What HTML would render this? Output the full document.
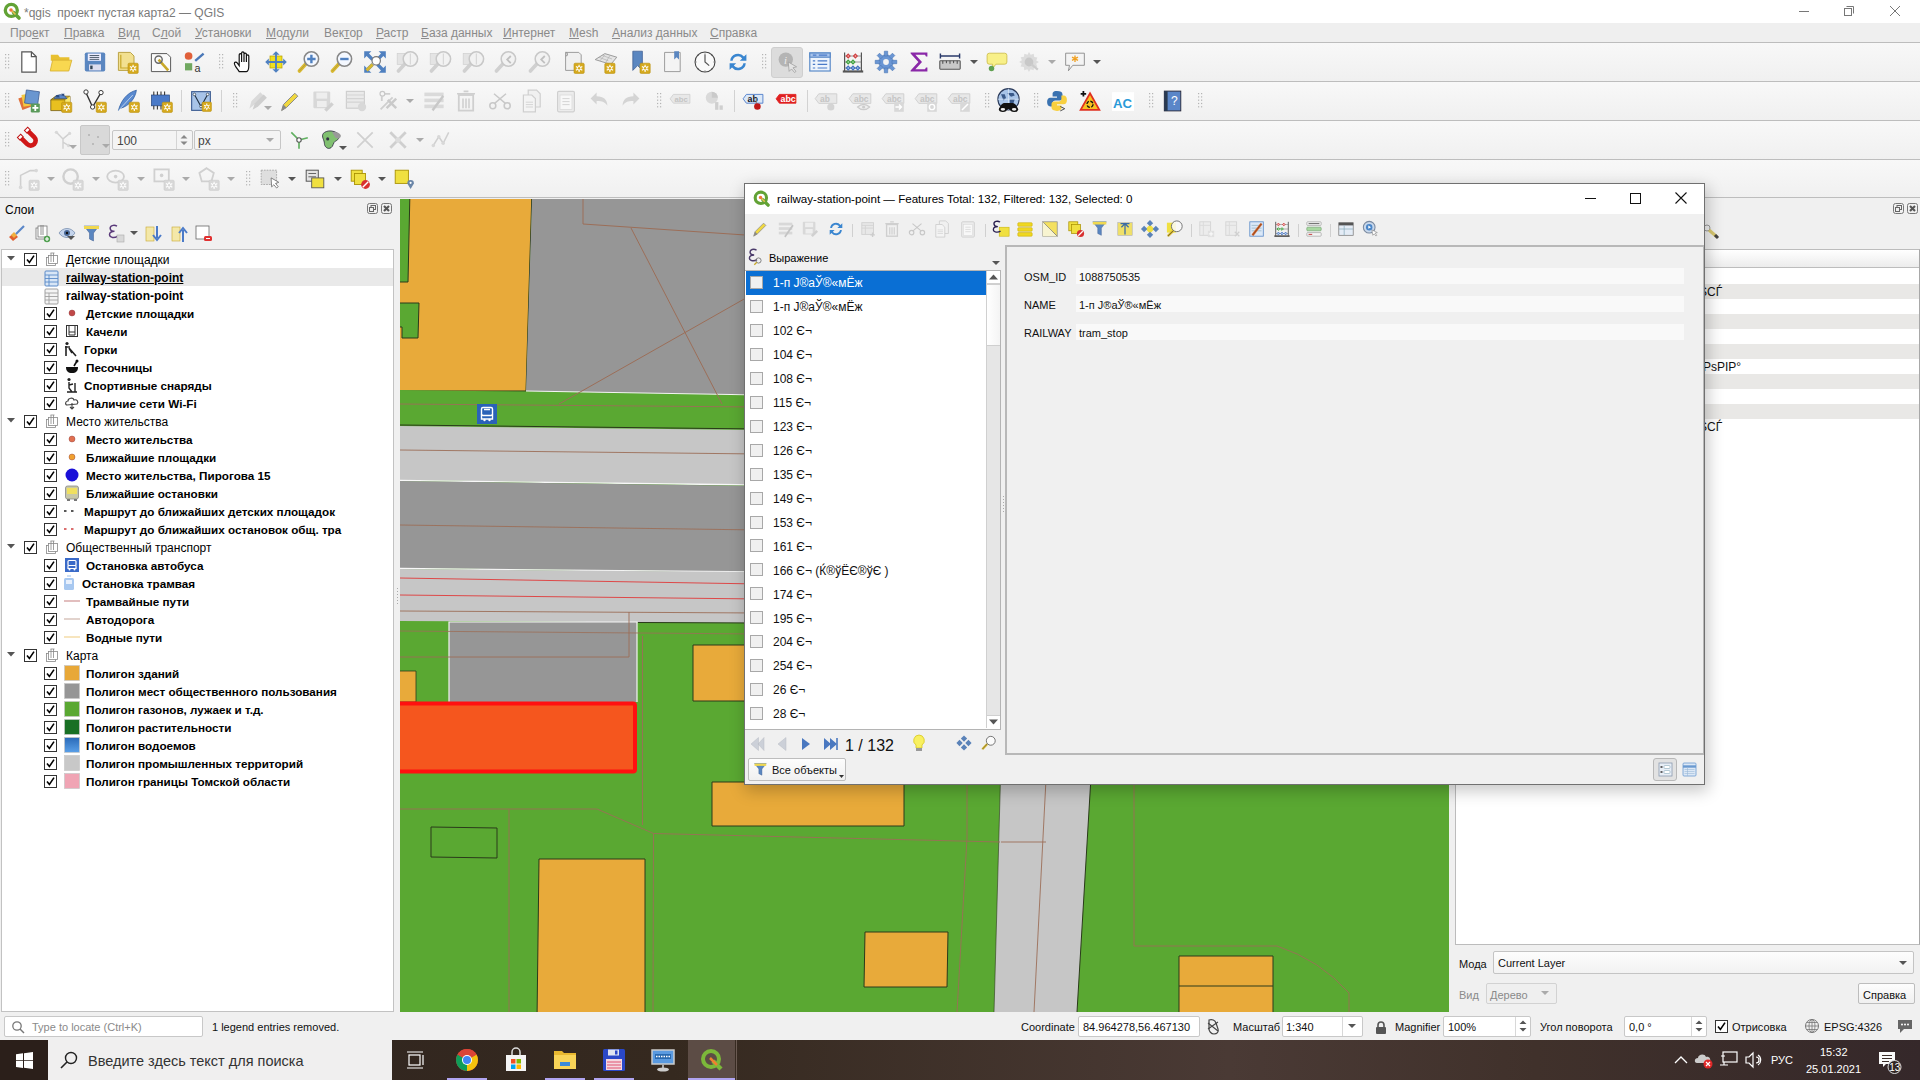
<!DOCTYPE html>
<html><head><meta charset="utf-8">
<style>
*{margin:0;padding:0;box-sizing:border-box}
html,body{width:1920px;height:1080px;overflow:hidden;background:#f0f0f0;font-family:"Liberation Sans",sans-serif;font-size:12px;color:#000;position:relative}
.a{position:absolute}
.t{position:absolute;white-space:nowrap;line-height:14px}
svg.i{position:absolute;overflow:visible}
#title{left:0;top:0;width:1920px;height:23px;background:#fff}
#menu{left:0;top:23px;width:1920px;height:19px;background:#efefef}
.tb{left:0;width:1920px;background:linear-gradient(#f8f8f8,#f0f0f0);border-top:1px solid #bdbdbd}
.hd{position:absolute;width:5px;height:18px;background-image:radial-gradient(circle,#bcbcbc 0.9px,transparent 1.2px);background-size:3px 3px}
.dd{position:absolute;width:0;height:0;border-left:4px solid transparent;border-right:4px solid transparent;border-top:4px solid #555}
.dd.g{border-top-color:#aaa}
.sep{position:absolute;width:1px;height:22px;background:#d2d2d2}
.menu span{position:absolute;top:3px;color:#8a8a8a;font-size:12px;line-height:14px}
</style></head><body>

<div id="title" class="a"></div>
<svg class="i" style="left:3.0px;top:2.0px" width="18" height="18" viewBox="0 0 18 18"><circle cx="8.3" cy="8.3" r="6" fill="none" stroke="#62a235" stroke-width="3.3"/><path d="M10.5 10.5l5.5 5.5" stroke="#62a235" stroke-width="3.6" stroke-linecap="round"/><path d="M8.5 8.5l4 4" stroke="#e8c050" stroke-width="1.6"/><circle cx="8" cy="8" r="1.8" fill="#f07838"/></svg>
<div class="t" style="left:24px;top:4.5px;font-size:12px;line-height:16px;color:#7a7a7a;">*qgis&nbsp; проект пустая карта2 — QGIS</div>
<div class="a" style="left:1799px;top:11px;width:10px;height:1px;background:#777"></div>
<svg class="i" style="left:1843px;top:5px" width="12" height="12" viewBox="0 0 12 12"><path d="M3.5 1.5h7v7" fill="none" stroke="#777" stroke-width="1"/><rect x="1.5" y="3.5" width="7" height="7" fill="none" stroke="#777" stroke-width="1"/></svg>
<svg class="i" style="left:1889px;top:5px" width="12" height="12" viewBox="0 0 12 12"><path d="M1 1l10 10M11 1L1 11" stroke="#777" stroke-width="1"/></svg>
<div id="menu" class="a menu">
<span style="left:10px">Про<u>е</u>кт</span>
<span style="left:64px"><u>П</u>равка</span>
<span style="left:118px"><u>В</u>ид</span>
<span style="left:152px">С<u>л</u>ой</span>
<span style="left:195px"><u>У</u>становки</span>
<span style="left:266px"><u>М</u>одули</span>
<span style="left:324px">Век<u>т</u>ор</span>
<span style="left:376px"><u>Р</u>астр</span>
<span style="left:421px"><u>Б</u>аза данных</span>
<span style="left:503px"><u>И</u>нтернет</span>
<span style="left:569px"><u>M</u>esh</span>
<span style="left:612px"><u>А</u>нализ данных</span>
<span style="left:710px"><u>С</u>правка</span>
</div>
<div class="a tb" style="top:42px;height:39px"></div>
<div class="a tb" style="top:81px;height:39px"></div>
<div class="a tb" style="top:120px;height:39px"></div>
<div class="a tb" style="top:159px;height:39px"></div>
<div class="a" style="left:0px;top:197px;width:1920px;height:1px;background:#bdbdbd"></div>
<svg class="i" style="left:5px;top:54.0px" width="5" height="15" viewBox="0 0 5 15"><rect x="0" y="0" width="1.2" height="1.2" fill="#b4b4b4"/><rect x="0" y="3.3" width="1.2" height="1.2" fill="#b4b4b4"/><rect x="0" y="6.6" width="1.2" height="1.2" fill="#b4b4b4"/><rect x="0" y="9.9" width="1.2" height="1.2" fill="#b4b4b4"/><rect x="0" y="13.2" width="1.2" height="1.2" fill="#b4b4b4"/><rect x="3" y="0" width="1.2" height="1.2" fill="#b4b4b4"/><rect x="3" y="3.3" width="1.2" height="1.2" fill="#b4b4b4"/><rect x="3" y="6.6" width="1.2" height="1.2" fill="#b4b4b4"/><rect x="3" y="9.9" width="1.2" height="1.2" fill="#b4b4b4"/><rect x="3" y="13.2" width="1.2" height="1.2" fill="#b4b4b4"/></svg>
<svg class="i" style="left:16.5px;top:49.5px" width="24" height="24" viewBox="0 0 20 20"><path d="M4 1.5h8l4 4v13H4z" fill="#fff" stroke="#555" stroke-width="1"/><path d="M12 1.5v4h4" fill="none" stroke="#555"/></svg>
<svg class="i" style="left:49.0px;top:49.5px" width="24" height="24" viewBox="0 0 20 20"><path d="M1.5 4h6l1.5 2h8v3H1.5z" fill="#e8c030"/><path d="M1 17.5l2-9h16l-2.5 9z" fill="#f8d850" stroke="#d8b030" stroke-width=".7"/></svg>
<svg class="i" style="left:83.0px;top:49.5px" width="24" height="24" viewBox="0 0 20 20"><rect x="1.5" y="2" width="17" height="16" rx="1.5" fill="#5a86c0"/><rect x="4" y="3" width="11" height="6" fill="#eef"/><path d="M5.5 4.6h8M5.5 6.2h8M5.5 7.8h8" stroke="#345" stroke-width=".7"/><rect x="5" y="12" width="10" height="5" fill="#dde"/><rect x="6" y="13" width="2" height="3" fill="#345"/></svg>
<svg class="i" style="left:115.5px;top:49.5px" width="24" height="24" viewBox="0 0 20 20"><path d="M2 2h10l3 3v12H2z" fill="#f2e090" stroke="#b8a040" stroke-width=".8"/><path d="M4 4v11h9" stroke="#c8a828" fill="none"/><rect x="10" y="11" width="8.5" height="8.5" rx="1" fill="#d6aa1e" stroke="#b89010" stroke-width=".5"/><g stroke="#fff" stroke-width=".9"><path d="M14.25 12.2v6.1M11.6 13.7l5.3 3.1M16.9 13.7l-5.3 3.1"/></g><circle cx="14.25" cy="15.25" r="1.5" fill="#d6aa1e" stroke="#fff" stroke-width=".8"/></svg>
<svg class="i" style="left:149.0px;top:49.5px" width="24" height="24" viewBox="0 0 20 20"><path d="M2 3h13l3 3v12H2z" fill="#fafafa" stroke="#555" stroke-width=".8"/><path d="M8 8l8 9" stroke="#c8a828" stroke-width="2.2"/><circle cx="8" cy="8" r="3" fill="none" stroke="#666" stroke-width="1.2"/></svg>
<svg class="i" style="left:182.0px;top:49.5px" width="24" height="24" viewBox="0 0 20 20"><circle cx="5.5" cy="5" r="3.2" fill="#e0603a"/><path d="M11 9l7-6" stroke="#4a78b8" stroke-width="2"/><rect x="2.5" y="11" width="6" height="6" fill="#70a860"/><text x="10.5" y="18" font-size="9" font-family="Liberation Sans" fill="#333">a</text></svg>
<svg class="i" style="left:219px;top:54.0px" width="5" height="15" viewBox="0 0 5 15"><rect x="0" y="0" width="1.2" height="1.2" fill="#b4b4b4"/><rect x="0" y="3.3" width="1.2" height="1.2" fill="#b4b4b4"/><rect x="0" y="6.6" width="1.2" height="1.2" fill="#b4b4b4"/><rect x="0" y="9.9" width="1.2" height="1.2" fill="#b4b4b4"/><rect x="0" y="13.2" width="1.2" height="1.2" fill="#b4b4b4"/><rect x="3" y="0" width="1.2" height="1.2" fill="#b4b4b4"/><rect x="3" y="3.3" width="1.2" height="1.2" fill="#b4b4b4"/><rect x="3" y="6.6" width="1.2" height="1.2" fill="#b4b4b4"/><rect x="3" y="9.9" width="1.2" height="1.2" fill="#b4b4b4"/><rect x="3" y="13.2" width="1.2" height="1.2" fill="#b4b4b4"/></svg>
<svg class="i" style="left:231.5px;top:49.5px" width="24" height="24" viewBox="0 0 20 20"><path d="M6 18c-2-3-4-5-4-7 0-1 1.5-1.5 2.5 0l1.5 2V4c0-1.2 2-1.2 2 0v6V2.5c0-1.2 2-1.2 2 0V10V3.5c0-1.2 2-1.2 2 0V10V5c0-1.2 2-1.2 2 0v8c0 3-1 5-2 5z" fill="#fff" stroke="#111" stroke-width="1"/></svg>
<svg class="i" style="left:264.0px;top:49.5px" width="24" height="24" viewBox="0 0 20 20"><rect x="5" y="5" width="10" height="10" fill="#f0e020" stroke="#b8a000" stroke-width=".6"/><path d="M10 1l3 3h-6zM10 19l3-3h-6zM1 10l3-3v6zM19 10l-3-3v6z" fill="#4f80c0"/><path d="M10 3v14M3 10h14" stroke="#4f80c0" stroke-width="1.6"/></svg>
<svg class="i" style="left:297.0px;top:49.5px" width="24" height="24" viewBox="0 0 20 20"><path d="M7.5 11.5L2 17.5" stroke="#d8b830" stroke-width="3" stroke-linecap="round"/><path d="M7.5 11.5L2 17.5" stroke="#555" stroke-width="0.5" opacity="0.4"/><circle cx="12" cy="7.5" r="6" fill="#f4f8ff" stroke="#888" stroke-width="1.3"/><path d="M12 4v7M8.5 7.5h7" stroke="#4f80c0" stroke-width="2"/></svg>
<svg class="i" style="left:330.0px;top:49.5px" width="24" height="24" viewBox="0 0 20 20"><path d="M7.5 11.5L2 17.5" stroke="#d8b830" stroke-width="3" stroke-linecap="round"/><path d="M7.5 11.5L2 17.5" stroke="#555" stroke-width="0.5" opacity="0.4"/><circle cx="12" cy="7.5" r="6" fill="#f4f8ff" stroke="#888" stroke-width="1.3"/><path d="M8.5 7.5h7" stroke="#4f80c0" stroke-width="2"/></svg>
<svg class="i" style="left:363.0px;top:49.5px" width="24" height="24" viewBox="0 0 20 20"><path d="M1 1h6l-2 2 4 4-2 2-4-4-2 2zM19 1v6l-2-2-4 4-2-2 4-4-2-2zM19 19h-6l2-2-4-4 2-2 4 4 2-2zM1 19v-6l2 2 4-4 2 2-4 4 2 2z" fill="#4f80c0"/><path d="M8 12L3 17" stroke="#d8b830" stroke-width="2.5"/><circle cx="11" cy="9" r="3.5" fill="#fff" stroke="#777"/></svg>
<svg class="i" style="left:395.5px;top:49.5px" width="24" height="24" viewBox="0 0 20 20"><rect x="1" y="3" width="9" height="9" fill="#e4e4e4" stroke="#d0d0d0" stroke-width=".6"/><path d="M7.5 11.5L2 17.5" stroke="#d0d0d0" stroke-width="3" stroke-linecap="round"/><path d="M7.5 11.5L2 17.5" stroke="#555" stroke-width="0.5" opacity="0"/><circle cx="12" cy="7.5" r="6" fill="#f2f2f2" stroke="#c8c8c8" stroke-width="1.3"/><path d="M12 3v9" stroke="#d8d8d8" stroke-width="1"/></svg>
<svg class="i" style="left:429.0px;top:49.5px" width="24" height="24" viewBox="0 0 20 20"><rect x="1" y="3" width="9" height="9" fill="#e4e4e4" stroke="#d0d0d0" stroke-width=".6"/><path d="M7.5 11.5L2 17.5" stroke="#d0d0d0" stroke-width="3" stroke-linecap="round"/><path d="M7.5 11.5L2 17.5" stroke="#555" stroke-width="0.5" opacity="0"/><circle cx="12" cy="7.5" r="6" fill="#f2f2f2" stroke="#c8c8c8" stroke-width="1.3"/><path d="M12 3v9" stroke="#d8d8d8" stroke-width="1"/></svg>
<svg class="i" style="left:462.0px;top:49.5px" width="24" height="24" viewBox="0 0 20 20"><rect x="1" y="3" width="9" height="9" fill="#e4e4e4" stroke="#d0d0d0" stroke-width=".6"/><path d="M7.5 11.5L2 17.5" stroke="#d0d0d0" stroke-width="3" stroke-linecap="round"/><path d="M7.5 11.5L2 17.5" stroke="#555" stroke-width="0.5" opacity="0"/><circle cx="12" cy="7.5" r="6" fill="#f2f2f2" stroke="#c8c8c8" stroke-width="1.3"/><path d="M12 3v9" stroke="#d8d8d8" stroke-width="1"/></svg>
<svg class="i" style="left:494.0px;top:49.5px" width="24" height="24" viewBox="0 0 20 20"><path d="M7.5 11.5L2 17.5" stroke="#d0d0d0" stroke-width="3" stroke-linecap="round"/><path d="M7.5 11.5L2 17.5" stroke="#555" stroke-width="0.5" opacity="0"/><circle cx="12" cy="7.5" r="6" fill="#f2f2f2" stroke="#c8c8c8" stroke-width="1.3"/><path d="M14 5l-3 3 3 3" stroke="#c0c0c0" fill="none" stroke-width="1.5"/></svg>
<svg class="i" style="left:528.0px;top:49.5px" width="24" height="24" viewBox="0 0 20 20"><path d="M7.5 11.5L2 17.5" stroke="#d0d0d0" stroke-width="3" stroke-linecap="round"/><path d="M7.5 11.5L2 17.5" stroke="#555" stroke-width="0.5" opacity="0"/><circle cx="12" cy="7.5" r="6" fill="#f2f2f2" stroke="#c8c8c8" stroke-width="1.3"/><path d="M14 5l-3 3 3 3" stroke="#c0c0c0" fill="none" stroke-width="1.5"/></svg>
<svg class="i" style="left:561.5px;top:49.5px" width="24" height="24" viewBox="0 0 20 20"><path d="M3 2h11l2 2v13H3z" fill="#f0f0f0" stroke="#999" stroke-width=".8"/><path d="M3 2c2 0 2 3 0 3" stroke="#999" fill="none"/><rect x="10" y="11" width="8.5" height="8.5" rx="1" fill="#d6aa1e" stroke="#b89010" stroke-width=".5"/><g stroke="#fff" stroke-width=".9"><path d="M14.25 12.2v6.1M11.6 13.7l5.3 3.1M16.9 13.7l-5.3 3.1"/></g><circle cx="14.25" cy="15.25" r="1.5" fill="#d6aa1e" stroke="#fff" stroke-width=".8"/></svg>
<svg class="i" style="left:594.0px;top:49.5px" width="24" height="24" viewBox="0 0 20 20"><path d="M1 8l8-5 10 3-5 6z" fill="#e4e4e4" stroke="#999" stroke-width=".8"/><path d="M4 6l8 3M7 4.5l8 3M5 9l4-5M10 10l3-5" stroke="#aaa" stroke-width=".5"/><rect x="9" y="11" width="8.5" height="8.5" rx="1" fill="#d6aa1e" stroke="#b89010" stroke-width=".5"/><g stroke="#fff" stroke-width=".9"><path d="M13.25 12.2v6.1M10.6 13.7l5.3 3.1M15.9 13.7l-5.3 3.1"/></g><circle cx="13.25" cy="15.25" r="1.5" fill="#d6aa1e" stroke="#fff" stroke-width=".8"/></svg>
<svg class="i" style="left:628.0px;top:49.5px" width="24" height="24" viewBox="0 0 20 20"><path d="M4 1h8v16l-4-4-4 4z" fill="#5a86c0" stroke="#3a5a90" stroke-width=".6"/><rect x="10" y="11" width="8.5" height="8.5" rx="1" fill="#d6aa1e" stroke="#b89010" stroke-width=".5"/><g stroke="#fff" stroke-width=".9"><path d="M14.25 12.2v6.1M11.6 13.7l5.3 3.1M16.9 13.7l-5.3 3.1"/></g><circle cx="14.25" cy="15.25" r="1.5" fill="#d6aa1e" stroke="#fff" stroke-width=".8"/></svg>
<svg class="i" style="left:660.5px;top:49.5px" width="24" height="24" viewBox="0 0 20 20"><path d="M3 2h13v16H3z" fill="#f4f4f4" stroke="#999" stroke-width=".8"/><path d="M11 1h4v7l-2-2-2 2z" fill="#5a86c0"/></svg>
<svg class="i" style="left:693.0px;top:49.5px" width="24" height="24" viewBox="0 0 20 20"><circle cx="10" cy="10" r="8.3" fill="#fafafa" stroke="#444" stroke-width=".9"/><path d="M10 3.5v6.5l3.5 3" stroke="#555" stroke-width="1" fill="none"/><g stroke="#666" stroke-width=".7"><path d="M10 2v1M10 17v1M2 10h1M17 10h1M4.3 4.3l.7.7M15 15l.7.7M15.7 4.3l-.7.7M4.3 15.7l.7-.7"/></g></svg>
<svg class="i" style="left:725.5px;top:49.5px" width="24" height="24" viewBox="0 0 20 20"><path d="M3.5 9A6.5 6.5 0 0 1 15 5.5L17 3.5V9h-5.5l2-2A4.5 4.5 0 0 0 5.5 9z" fill="#3a86d0"/><path d="M16.5 11A6.5 6.5 0 0 1 5 14.5L3 16.5V11h5.5l-2 2A4.5 4.5 0 0 0 14.5 11z" fill="#3a86d0"/></svg>
<svg class="i" style="left:762px;top:54.0px" width="5" height="15" viewBox="0 0 5 15"><rect x="0" y="0" width="1.2" height="1.2" fill="#b4b4b4"/><rect x="0" y="3.3" width="1.2" height="1.2" fill="#b4b4b4"/><rect x="0" y="6.6" width="1.2" height="1.2" fill="#b4b4b4"/><rect x="0" y="9.9" width="1.2" height="1.2" fill="#b4b4b4"/><rect x="0" y="13.2" width="1.2" height="1.2" fill="#b4b4b4"/><rect x="3" y="0" width="1.2" height="1.2" fill="#b4b4b4"/><rect x="3" y="3.3" width="1.2" height="1.2" fill="#b4b4b4"/><rect x="3" y="6.6" width="1.2" height="1.2" fill="#b4b4b4"/><rect x="3" y="9.9" width="1.2" height="1.2" fill="#b4b4b4"/><rect x="3" y="13.2" width="1.2" height="1.2" fill="#b4b4b4"/></svg>
<div class="a" style="left:771px;top:47px;width:32px;height:31px;background:#dcdcdc;border:1px solid #cfcfcf;border-radius:3px"></div>
<svg class="i" style="left:775.0px;top:49.5px" width="24" height="24" viewBox="0 0 20 20"><circle cx="9" cy="8" r="6" fill="#b4b4b4"/><text x="7.5" y="11.5" font-size="9" font-style="italic" font-family="Liberation Serif" fill="#eee">i</text><path d="M11 10l7 4-3 .8 2.5 3-1.2 1-2.5-3-2 2z" fill="#e4e4e4" stroke="#999" stroke-width=".6"/></svg>
<svg class="i" style="left:808.0px;top:49.5px" width="24" height="24" viewBox="0 0 20 20"><rect x="1.5" y="2.5" width="17" height="15" fill="#eef4fc" stroke="#5a8ac8" stroke-width="1"/><rect x="1.5" y="2.5" width="17" height="3.5" fill="#a8c4ec" stroke="#5a8ac8" stroke-width="1"/><path d="M4 4.2h3M9 4.2h7M4 9h2M8 9h8M4 12h2M8 12h8M4 15h2M8 15h8" stroke="#4a7ac8" stroke-width="1"/></svg>
<svg class="i" style="left:840.5px;top:49.5px" width="24" height="24" viewBox="0 0 20 20"><path d="M3 2v16M17 2v16" stroke="#555" stroke-width="1"/><rect x="1.5" y="17" width="17" height="1.8" fill="#555"/><path d="M3 5h14M3 10h14M3 15h14" stroke="#777" stroke-width=".6"/><g stroke-width="1"><path d="M6 3.5l1.5 1.5L6 6.5 4.5 5zM12 3.5l1.5 1.5L12 6.5 10.5 5z" fill="#f4b0b0" stroke="#d04040"/><path d="M6 8.5l1.5 1.5L6 11.5 4.5 10zM10 8.5l1.5 1.5L10 11.5 8.5 10z" fill="#b0e0b0" stroke="#40a040"/><path d="M6 13.5l1.5 1.5L6 16.5 4.5 15zM10 13.5l1.5 1.5L10 16.5 8.5 15zM14 13.5l1.5 1.5L14 16.5 12.5 15z" fill="#b0c8f0" stroke="#4070c0"/></g></svg>
<svg class="i" style="left:874.0px;top:49.5px" width="24" height="24" viewBox="0 0 20 20"><g fill="#6a96d4" stroke="#4a76b4" stroke-width=".5"><circle cx="10" cy="10" r="6"/><path d="M8.6 1h2.8v4H8.6zM8.6 15h2.8v4H8.6zM1 8.6h4v2.8H1zM15 8.6h4v2.8h-4z"/><path d="M8.6 1h2.8v4H8.6zM8.6 15h2.8v4H8.6zM1 8.6h4v2.8H1zM15 8.6h4v2.8h-4z" transform="rotate(45 10 10)"/></g><circle cx="10" cy="10" r="2.4" fill="#f4f4f4"/></svg>
<svg class="i" style="left:907.0px;top:49.5px" width="24" height="24" viewBox="0 0 20 20"><path d="M3 2h14v3.5h-1.2L15 4H7l5.5 6L7 16h8l.8-1.5H17V18H3v-1l6.5-7L3 3z" fill="#8a28a8"/></svg>
<svg class="i" style="left:938.0px;top:49.5px" width="24" height="24" viewBox="0 0 20 20"><rect x="1.5" y="9" width="17" height="7" rx=".5" fill="#c8c8c8" stroke="#555" stroke-width=".9"/><path d="M4 9v2.5M7 9v2M10 9v2.5M13 9v2M16 9v2.5" stroke="#444" stroke-width=".8"/><path d="M2 5h16M2 3v4M18 3v4" stroke="#2a3a6a" stroke-width="1.2"/></svg>
<div class="dd" style="left:970px;top:59.5px"></div>
<svg class="i" style="left:986.0px;top:50.5px" width="22" height="22" viewBox="0 0 20 20"><path d="M3 2h14a2 2 0 0 1 2 2v6a2 2 0 0 1-2 2H9l-3 4v-4H3a2 2 0 0 1-2-2V4a2 2 0 0 1 2-2z" fill="#f8f088" stroke="#c8b840" stroke-width=".7"/><circle cx="5" cy="16" r="2.5" fill="#60a050"/></svg>
<svg class="i" style="left:1018.0px;top:50.5px" width="22" height="22" viewBox="0 0 20 20"><path d="M10 1l1.5 2.5 2.8-1 .4 2.9 2.9.4-1 2.8L19 10l-2.5 1.5 1 2.8-2.9.4-.4 2.9-2.8-1L10 19l-1.5-2.5-2.8 1-.4-2.9-2.9-.4 1-2.8L1 10l2.5-1.5-1-2.8 2.9-.4.4-2.9 2.8 1z" fill="#dcdcdc"/><circle cx="10" cy="10" r="4" fill="#c8c8c8"/><path d="M12 12l6 5" stroke="#ccc" stroke-width="2"/></svg>
<div class="dd g" style="left:1048px;top:59.5px"></div>
<svg class="i" style="left:1064.0px;top:50.5px" width="22" height="22" viewBox="0 0 20 20"><path d="M1.5 2h17v11H8l-4 5 1-5H1.5z" fill="#f4f4f4" stroke="#888" stroke-width=".8"/><path d="M10 4v6M7.3 5.5l5.4 3M12.7 5.5l-5.4 3" stroke="#f0a020" stroke-width="1.2"/></svg>
<div class="dd" style="left:1093px;top:59.5px"></div>
<svg class="i" style="left:5px;top:93.0px" width="5" height="15" viewBox="0 0 5 15"><rect x="0" y="0" width="1.2" height="1.2" fill="#b4b4b4"/><rect x="0" y="3.3" width="1.2" height="1.2" fill="#b4b4b4"/><rect x="0" y="6.6" width="1.2" height="1.2" fill="#b4b4b4"/><rect x="0" y="9.9" width="1.2" height="1.2" fill="#b4b4b4"/><rect x="0" y="13.2" width="1.2" height="1.2" fill="#b4b4b4"/><rect x="3" y="0" width="1.2" height="1.2" fill="#b4b4b4"/><rect x="3" y="3.3" width="1.2" height="1.2" fill="#b4b4b4"/><rect x="3" y="6.6" width="1.2" height="1.2" fill="#b4b4b4"/><rect x="3" y="9.9" width="1.2" height="1.2" fill="#b4b4b4"/><rect x="3" y="13.2" width="1.2" height="1.2" fill="#b4b4b4"/></svg>
<svg class="i" style="left:16.5px;top:88.5px" width="24" height="24" viewBox="0 0 20 20"><rect x="2.5" y="6" width="10" height="10" fill="#e0703a" transform="rotate(-20 7.5 11)"/><rect x="4.5" y="4" width="10" height="10" fill="#f4c840" transform="rotate(-10 9.5 9)"/><rect x="7" y="1.5" width="11" height="11" fill="#6a96d0" stroke="#3a5a90" stroke-width=".6" transform="rotate(8 12.5 7)"/><rect x="11.5" y="12" width="7.5" height="7.5" rx="1" fill="#5a9a5a"/><path d="M15.25 13.3v5M12.8 15.8h5" stroke="#fff" stroke-width="1.5"/></svg>
<svg class="i" style="left:49.0px;top:88.5px" width="24" height="24" viewBox="0 0 20 20"><path d="M1.5 9l4-3h12v8l-4 4H1.5z" fill="#e8c020" stroke="#7a6010" stroke-width=".7"/><path d="M1.5 9h12v9M13.5 9l4-3" stroke="#7a6010" stroke-width=".7" fill="none"/><path d="M13.5 9l4-3v8l-4 4z" fill="#f8e870"/><path d="M4 8a6 5.5 0 0 1 11 0z" fill="#5a86c8" stroke="#2a4a80" stroke-width=".6"/><path d="M6 5h2l1 2H6zM10 4h3l-1 2z" fill="#2a4a80"/><rect x="10.5" y="11" width="8.5" height="8.5" rx="1" fill="#d6aa1e" stroke="#b89010" stroke-width=".5"/><g stroke="#fff" stroke-width=".9"><path d="M14.75 12.2v6.1M12.1 13.7l5.3 3.1M17.4 13.7l-5.3 3.1"/></g><circle cx="14.75" cy="15.25" r="1.5" fill="#d6aa1e" stroke="#fff" stroke-width=".8"/></svg>
<svg class="i" style="left:83.0px;top:88.5px" width="24" height="24" viewBox="0 0 20 20"><path d="M2 2l6 13 7-12" fill="none" stroke="#333" stroke-width="1.1"/><circle cx="2.5" cy="2.5" r="1.8" fill="#fff" stroke="#333" stroke-width=".8"/><circle cx="8" cy="15" r="1.8" fill="#fff" stroke="#333" stroke-width=".8"/><circle cx="15" cy="3" r="1.8" fill="#fff" stroke="#333" stroke-width=".8"/><rect x="11" y="11" width="8.5" height="8.5" rx="1" fill="#d6aa1e" stroke="#b89010" stroke-width=".5"/><g stroke="#fff" stroke-width=".9"><path d="M15.25 12.2v6.1M12.6 13.7l5.3 3.1M17.9 13.7l-5.3 3.1"/></g><circle cx="15.25" cy="15.25" r="1.5" fill="#d6aa1e" stroke="#fff" stroke-width=".8"/></svg>
<svg class="i" style="left:115.5px;top:88.5px" width="24" height="24" viewBox="0 0 20 20"><path d="M2 18C4 10 9 3 17 1c-1 7-6 13-13 15z" fill="#5a8ad0" stroke="#2a5aa0" stroke-width=".6"/><path d="M2 18L14 5" stroke="#cde" stroke-width=".7"/><rect x="11" y="11" width="8.5" height="8.5" rx="1" fill="#d6aa1e" stroke="#b89010" stroke-width=".5"/><g stroke="#fff" stroke-width=".9"><path d="M15.25 12.2v6.1M12.6 13.7l5.3 3.1M17.9 13.7l-5.3 3.1"/></g><circle cx="15.25" cy="15.25" r="1.5" fill="#d6aa1e" stroke="#fff" stroke-width=".8"/></svg>
<svg class="i" style="left:149.0px;top:88.5px" width="24" height="24" viewBox="0 0 20 20"><rect x="2" y="5" width="15" height="9" fill="#4a7ac8" stroke="#2a4a80" stroke-width=".6"/><path d="M4 2v3M7 2v3M10 2v3M13 2v3M4 14v3M7 14v3M10 14v3M13 14v3" stroke="#333" stroke-width=".9"/><rect x="11" y="11" width="8.5" height="8.5" rx="1" fill="#d6aa1e" stroke="#b89010" stroke-width=".5"/><g stroke="#fff" stroke-width=".9"><path d="M15.25 12.2v6.1M12.6 13.7l5.3 3.1M17.9 13.7l-5.3 3.1"/></g><circle cx="15.25" cy="15.25" r="1.5" fill="#d6aa1e" stroke="#fff" stroke-width=".8"/></svg>
<div class="sep" style="left:181px;top:89.5px;height:22px;background:#d2d2d2"></div>
<svg class="i" style="left:190.0px;top:89.5px" width="22" height="22" viewBox="0 0 20 20"><rect x="1.5" y="1.5" width="17" height="17" fill="#a8c4e8" stroke="#3a5a90" stroke-width="1"/><path d="M4 4l6 11 6-11" fill="none" stroke="#234" stroke-width="1"/><circle cx="4" cy="4" r="1.2" fill="#fff" stroke="#234" stroke-width=".6"/><circle cx="10" cy="15" r="1.2" fill="#fff" stroke="#234" stroke-width=".6"/><circle cx="16" cy="4" r="1.2" fill="#fff" stroke="#234" stroke-width=".6"/><rect x="11" y="11" width="8.5" height="8.5" rx="1" fill="#d6aa1e" stroke="#b89010" stroke-width=".5"/><g stroke="#fff" stroke-width=".9"><path d="M15.25 12.2v6.1M12.6 13.7l5.3 3.1M17.9 13.7l-5.3 3.1"/></g><circle cx="15.25" cy="15.25" r="1.5" fill="#d6aa1e" stroke="#fff" stroke-width=".8"/></svg>
<div class="sep" style="left:221px;top:89.5px;height:22px;background:#d2d2d2"></div>
<svg class="i" style="left:233px;top:93.0px" width="5" height="15" viewBox="0 0 5 15"><rect x="0" y="0" width="1.2" height="1.2" fill="#b4b4b4"/><rect x="0" y="3.3" width="1.2" height="1.2" fill="#b4b4b4"/><rect x="0" y="6.6" width="1.2" height="1.2" fill="#b4b4b4"/><rect x="0" y="9.9" width="1.2" height="1.2" fill="#b4b4b4"/><rect x="0" y="13.2" width="1.2" height="1.2" fill="#b4b4b4"/><rect x="3" y="0" width="1.2" height="1.2" fill="#b4b4b4"/><rect x="3" y="3.3" width="1.2" height="1.2" fill="#b4b4b4"/><rect x="3" y="6.6" width="1.2" height="1.2" fill="#b4b4b4"/><rect x="3" y="9.9" width="1.2" height="1.2" fill="#b4b4b4"/><rect x="3" y="13.2" width="1.2" height="1.2" fill="#b4b4b4"/></svg>
<svg class="i" style="left:246.0px;top:89.5px" width="22" height="22" viewBox="0 0 20 20"><path d="M3 17l2-7 8-8 3 3-8 8z" fill="#dadada"/><path d="M6 18l2-6 8-8 3 3-8 8z" fill="#cfcfcf"/></svg>
<div class="dd g" style="left:264px;top:105.5px"></div>
<svg class="i" style="left:278.0px;top:88.5px" width="24" height="24" viewBox="0 0 20 20"><path d="M3 18l1.5-5L14 3.5 16.5 6 7 15.5z" fill="#f0d840" stroke="#888" stroke-width=".8"/><path d="M3 18l1.5-5 2.5 2.5z" fill="#888"/></svg>
<svg class="i" style="left:310.5px;top:88.5px" width="24" height="24" viewBox="0 0 20 20"><rect x="2" y="2" width="14" height="14" rx="1" fill="#d8d8d8"/><rect x="4.5" y="3" width="9" height="5" fill="#eee"/><rect x="5" y="10" width="8" height="5" fill="#eee"/><path d="M11 17l6-6 2 2-6 6z" fill="#d0d0d0"/></svg>
<svg class="i" style="left:344.0px;top:88.5px" width="24" height="24" viewBox="0 0 20 20"><rect x="2" y="2" width="15" height="14" fill="#eaeaea" stroke="#cfcfcf"/><path d="M2 5h15M2 8h15M2 11h15" stroke="#d4d4d4"/><circle cx="15" cy="15" r="3.5" fill="#d8d8d8"/></svg>
<svg class="i" style="left:377.0px;top:88.5px" width="24" height="24" viewBox="0 0 20 20"><path d="M3 17L13 7M6 4h5M4 6v4" stroke="#cfcfcf" stroke-width="1.5" fill="none"/><circle cx="4.5" cy="4" r="2" fill="none" stroke="#c8c8c8"/><path d="M8 16l8-8M9 9l7 7" stroke="#cacaca" stroke-width="2"/></svg>
<div class="dd g" style="left:406px;top:98.5px"></div>
<svg class="i" style="left:422.0px;top:88.5px" width="24" height="24" viewBox="0 0 20 20"><rect x="2" y="3" width="16" height="3" fill="#dadada"/><rect x="2" y="8" width="16" height="3" fill="#dadada"/><rect x="2" y="13" width="16" height="3" fill="#dadada"/><path d="M8 17l9-12 1.5 1.5-9 12z" fill="#c8c8c8"/></svg>
<svg class="i" style="left:454.0px;top:88.5px" width="24" height="24" viewBox="0 0 20 20"><rect x="4" y="5" width="12" height="13" fill="none" stroke="#cfcfcf" stroke-width="1.5"/><path d="M2.5 4h15M8 2h4M7.5 8v8M10 8v8M12.5 8v8" stroke="#cfcfcf" stroke-width="1.3"/></svg>
<svg class="i" style="left:488.0px;top:88.5px" width="24" height="24" viewBox="0 0 20 20"><circle cx="4" cy="14" r="2.5" fill="none" stroke="#c8c8c8" stroke-width="1.3"/><circle cx="16" cy="14" r="2.5" fill="none" stroke="#c8c8c8" stroke-width="1.3"/><path d="M5.5 12L15 4M14.5 12L5 4" stroke="#c8c8c8" stroke-width="1.2"/></svg>
<svg class="i" style="left:520.5px;top:88.5px" width="24" height="24" viewBox="0 0 20 20"><path d="M6 1h7l3 3v11H6z" fill="#f0f0f0" stroke="#cfcfcf"/><path d="M2 5h7l3 3v11H2z" fill="#f4f4f4" stroke="#cfcfcf"/><path d="M4 11h6M4 13h6M4 15h6" stroke="#d4d4d4" stroke-width=".8"/></svg>
<svg class="i" style="left:554.0px;top:88.5px" width="24" height="24" viewBox="0 0 20 20"><rect x="3" y="2" width="14" height="17" rx="1" fill="#ececec" stroke="#cfcfcf"/><rect x="5" y="5" width="10" height="12" fill="#f8f8f8" stroke="#d8d8d8" stroke-width=".6"/><path d="M7 8h6M7 10.5h6M7 13h6" stroke="#d4d4d4" stroke-width=".8"/></svg>
<svg class="i" style="left:587.0px;top:88.5px" width="24" height="24" viewBox="0 0 20 20"><path d="M3 8l5-5v3c6 0 9 3 9 8-2-3-4-4-9-4v3z" fill="#d4d4d4"/></svg>
<svg class="i" style="left:619.0px;top:88.5px" width="24" height="24" viewBox="0 0 20 20"><path d="M17 8l-5-5v3c-6 0-9 3-9 8 2-3 4-4 9-4v3z" fill="#d4d4d4"/></svg>
<svg class="i" style="left:657px;top:93.0px" width="5" height="15" viewBox="0 0 5 15"><rect x="0" y="0" width="1.2" height="1.2" fill="#b4b4b4"/><rect x="0" y="3.3" width="1.2" height="1.2" fill="#b4b4b4"/><rect x="0" y="6.6" width="1.2" height="1.2" fill="#b4b4b4"/><rect x="0" y="9.9" width="1.2" height="1.2" fill="#b4b4b4"/><rect x="0" y="13.2" width="1.2" height="1.2" fill="#b4b4b4"/><rect x="3" y="0" width="1.2" height="1.2" fill="#b4b4b4"/><rect x="3" y="3.3" width="1.2" height="1.2" fill="#b4b4b4"/><rect x="3" y="6.6" width="1.2" height="1.2" fill="#b4b4b4"/><rect x="3" y="9.9" width="1.2" height="1.2" fill="#b4b4b4"/><rect x="3" y="13.2" width="1.2" height="1.2" fill="#b4b4b4"/></svg>
<svg class="i" style="left:669.0px;top:89.5px" width="22" height="22" viewBox="0 0 20 20"><path d="M1 8l3-4h15v8H4z" fill="#e8e8e8" stroke="#d0d0d0" stroke-width=".8"/><text x="5" y="10.5" font-size="7" font-weight="bold" font-family="Liberation Sans" fill="#c4c4c4">abc</text></svg>
<svg class="i" style="left:702.5px;top:89.5px" width="22" height="22" viewBox="0 0 20 20"><circle cx="8" cy="7" r="5.5" fill="#dadada"/><path d="M8 7V1.5A5.5 5.5 0 0 1 13.5 7z" fill="#cacaca"/><rect x="11" y="11" width="3" height="7" fill="#cfcfcf"/><rect x="15" y="14" width="3" height="4" fill="#cfcfcf"/></svg>
<div class="sep" style="left:734px;top:89.5px;height:22px;background:#d2d2d2"></div>
<svg class="i" style="left:742.0px;top:89.5px" width="22" height="22" viewBox="0 0 20 20"><path d="M1 8l3-4h15v8H4z" fill="#dbe8f8" stroke="#4a7ac8" stroke-width=".8"/><text x="5" y="10.5" font-size="8" font-weight="bold" font-family="Liberation Sans" fill="#112">ab</text><path d="M13 7v6" stroke="#888" stroke-width="1"/><circle cx="14" cy="15" r="3" fill="#c01818"/></svg>
<svg class="i" style="left:775.0px;top:89.5px" width="22" height="22" viewBox="0 0 20 20"><path d="M1 8l3-4h15v8H4z" fill="#e02020" stroke="#e02020" stroke-width=".8"/><text x="5" y="10.5" font-size="8" font-weight="bold" font-family="Liberation Sans" fill="#fff">abc</text></svg>
<div class="sep" style="left:807px;top:89.5px;height:22px;background:#d2d2d2"></div>
<svg class="i" style="left:814.0px;top:88.5px" width="24" height="24" viewBox="0 0 20 20"><path d="M1 8l3-4h15v8H4z" fill="#e8e8e8" stroke="#d0d0d0" stroke-width=".8"/><text x="5" y="10.5" font-size="7" font-weight="bold" font-family="Liberation Sans" fill="#c4c4c4">ab</text><circle cx="14" cy="15" r="3" fill="#d4d4d4"/></svg>
<svg class="i" style="left:847.5px;top:88.5px" width="24" height="24" viewBox="0 0 20 20"><path d="M1 8l3-4h15v8H4z" fill="#e8e8e8" stroke="#d0d0d0" stroke-width=".8"/><text x="5" y="10.5" font-size="7" font-weight="bold" font-family="Liberation Sans" fill="#c4c4c4">abc</text><path d="M8 15c3-3 7-3 10 0-3 3-7 3-10 0z" fill="#eee" stroke="#ccc"/><circle cx="13" cy="15" r="1.3" fill="#ccc"/></svg>
<svg class="i" style="left:880.5px;top:88.5px" width="24" height="24" viewBox="0 0 20 20"><path d="M1 8l3-4h15v8H4z" fill="#e8e8e8" stroke="#d0d0d0" stroke-width=".8"/><text x="5" y="10.5" font-size="7" font-weight="bold" font-family="Liberation Sans" fill="#c4c4c4">abc</text><rect x="11" y="11" width="8" height="8" fill="#d8d8d8"/><path d="M12 15h5M15 13l2 2-2 2" stroke="#fff" stroke-width="1.2" fill="none"/></svg>
<svg class="i" style="left:914.0px;top:88.5px" width="24" height="24" viewBox="0 0 20 20"><path d="M1 8l3-4h15v8H4z" fill="#e8e8e8" stroke="#d0d0d0" stroke-width=".8"/><text x="5" y="10.5" font-size="7" font-weight="bold" font-family="Liberation Sans" fill="#c4c4c4">abc</text><rect x="11" y="11" width="8" height="8" fill="#d8d8d8"/><circle cx="15" cy="15" r="2.2" fill="none" stroke="#fff" stroke-width="1.2"/></svg>
<svg class="i" style="left:947.0px;top:88.5px" width="24" height="24" viewBox="0 0 20 20"><path d="M1 8l3-4h15v8H4z" fill="#e8e8e8" stroke="#d0d0d0" stroke-width=".8"/><text x="5" y="10.5" font-size="7" font-weight="bold" font-family="Liberation Sans" fill="#c4c4c4">abc</text><rect x="11" y="11" width="8" height="8" fill="#d8d8d8"/><path d="M12.5 17.5l5-5" stroke="#fff" stroke-width="1.3"/></svg>
<svg class="i" style="left:985px;top:93.0px" width="5" height="15" viewBox="0 0 5 15"><rect x="0" y="0" width="1.2" height="1.2" fill="#b4b4b4"/><rect x="0" y="3.3" width="1.2" height="1.2" fill="#b4b4b4"/><rect x="0" y="6.6" width="1.2" height="1.2" fill="#b4b4b4"/><rect x="0" y="9.9" width="1.2" height="1.2" fill="#b4b4b4"/><rect x="0" y="13.2" width="1.2" height="1.2" fill="#b4b4b4"/><rect x="3" y="0" width="1.2" height="1.2" fill="#b4b4b4"/><rect x="3" y="3.3" width="1.2" height="1.2" fill="#b4b4b4"/><rect x="3" y="6.6" width="1.2" height="1.2" fill="#b4b4b4"/><rect x="3" y="9.9" width="1.2" height="1.2" fill="#b4b4b4"/><rect x="3" y="13.2" width="1.2" height="1.2" fill="#b4b4b4"/></svg>
<svg class="i" style="left:995.5px;top:88.0px" width="25" height="25" viewBox="0 0 20 20"><circle cx="10" cy="9" r="8.5" fill="#a8c4e8" stroke="#2a3a5a" stroke-width=".9"/><path d="M4 5h3l1 3-2 2zM9 4h5l1 2-3 1zM11 9h4l-1 3h-3z" fill="#3a5a8a"/><path d="M1.5 9h17M10 .5v17" stroke="#e0ecf8" stroke-width=".5"/><path d="M3 17c0-3 2-5 4-5h6c2 0 4 2 4 5" fill="#111"/><ellipse cx="5.5" cy="17" rx="3.2" ry="2.2" fill="#111"/><ellipse cx="14.5" cy="17" rx="3.2" ry="2.2" fill="#111"/><ellipse cx="5.5" cy="17" rx="1.8" ry="1.1" fill="#eee"/><ellipse cx="14.5" cy="17" rx="1.8" ry="1.1" fill="#eee"/></svg>
<svg class="i" style="left:1034px;top:93.0px" width="5" height="15" viewBox="0 0 5 15"><rect x="0" y="0" width="1.2" height="1.2" fill="#b4b4b4"/><rect x="0" y="3.3" width="1.2" height="1.2" fill="#b4b4b4"/><rect x="0" y="6.6" width="1.2" height="1.2" fill="#b4b4b4"/><rect x="0" y="9.9" width="1.2" height="1.2" fill="#b4b4b4"/><rect x="0" y="13.2" width="1.2" height="1.2" fill="#b4b4b4"/><rect x="3" y="0" width="1.2" height="1.2" fill="#b4b4b4"/><rect x="3" y="3.3" width="1.2" height="1.2" fill="#b4b4b4"/><rect x="3" y="6.6" width="1.2" height="1.2" fill="#b4b4b4"/><rect x="3" y="9.9" width="1.2" height="1.2" fill="#b4b4b4"/><rect x="3" y="13.2" width="1.2" height="1.2" fill="#b4b4b4"/></svg>
<svg class="i" style="left:1046.0px;top:89.5px" width="22" height="22" viewBox="0 0 20 20"><path d="M10 1c-4 0-4 2-4 3v2h4v1H4c-2 0-3 1.5-3 4s1 4 3 4h2v-3c0-1.5 1-2.5 2.5-2.5h4c1.5 0 2.5-1 2.5-2.5V4c0-2-2-3-5-3z" fill="#3a72b0"/><path d="M10 19c4 0 4-2 4-3v-2h-4v-1h6c2 0 3-1.5 3-4s-1-4-3-4h-2v3c0 1.5-1 2.5-2.5 2.5h-4C6 10.5 5 11.5 5 13v3c0 2 2 3 5 3z" fill="#f8d040"/><path d="M13 15l4 2-4 2" stroke="#333" fill="none" stroke-width=".8"/></svg>
<svg class="i" style="left:1078.5px;top:89.5px" width="22" height="22" viewBox="0 0 20 20"><path d="M10 3l8.5 15h-17z" fill="#f8c020" stroke="#e03020" stroke-width="1.6"/><circle cx="10" cy="13" r="2.8" fill="none" stroke="#111" stroke-width="1.2" stroke-dasharray="3 1.4"/><path d="M4 1v5M1.5 3.5h5" stroke="#111" stroke-width="1.6"/></svg>
<svg class="i" style="left:1111.5px;top:89.5px" width="22" height="22" viewBox="0 0 20 20"><rect x="0" y="2" width="20" height="17" fill="#fff"/><text x="1" y="16" font-size="12" font-weight="bold" font-family="Liberation Sans" fill="#2a9ad8">AC</text></svg>
<svg class="i" style="left:1149px;top:93.0px" width="5" height="15" viewBox="0 0 5 15"><rect x="0" y="0" width="1.2" height="1.2" fill="#b4b4b4"/><rect x="0" y="3.3" width="1.2" height="1.2" fill="#b4b4b4"/><rect x="0" y="6.6" width="1.2" height="1.2" fill="#b4b4b4"/><rect x="0" y="9.9" width="1.2" height="1.2" fill="#b4b4b4"/><rect x="0" y="13.2" width="1.2" height="1.2" fill="#b4b4b4"/><rect x="3" y="0" width="1.2" height="1.2" fill="#b4b4b4"/><rect x="3" y="3.3" width="1.2" height="1.2" fill="#b4b4b4"/><rect x="3" y="6.6" width="1.2" height="1.2" fill="#b4b4b4"/><rect x="3" y="9.9" width="1.2" height="1.2" fill="#b4b4b4"/><rect x="3" y="13.2" width="1.2" height="1.2" fill="#b4b4b4"/></svg>
<svg class="i" style="left:1161.0px;top:89.5px" width="22" height="22" viewBox="0 0 20 20"><rect x="3" y="1" width="15" height="18" fill="#5a86c8" stroke="#223" stroke-width=".8"/><rect x="3" y="1" width="3" height="18" fill="#2a3a50"/><text x="9" y="14" font-size="11" font-family="Liberation Sans" fill="#fff">?</text></svg>
<svg class="i" style="left:1198px;top:93.0px" width="5" height="15" viewBox="0 0 5 15"><rect x="0" y="0" width="1.2" height="1.2" fill="#b4b4b4"/><rect x="0" y="3.3" width="1.2" height="1.2" fill="#b4b4b4"/><rect x="0" y="6.6" width="1.2" height="1.2" fill="#b4b4b4"/><rect x="0" y="9.9" width="1.2" height="1.2" fill="#b4b4b4"/><rect x="0" y="13.2" width="1.2" height="1.2" fill="#b4b4b4"/><rect x="3" y="0" width="1.2" height="1.2" fill="#b4b4b4"/><rect x="3" y="3.3" width="1.2" height="1.2" fill="#b4b4b4"/><rect x="3" y="6.6" width="1.2" height="1.2" fill="#b4b4b4"/><rect x="3" y="9.9" width="1.2" height="1.2" fill="#b4b4b4"/><rect x="3" y="13.2" width="1.2" height="1.2" fill="#b4b4b4"/></svg>
<svg class="i" style="left:5px;top:132.0px" width="5" height="15" viewBox="0 0 5 15"><rect x="0" y="0" width="1.2" height="1.2" fill="#b4b4b4"/><rect x="0" y="3.3" width="1.2" height="1.2" fill="#b4b4b4"/><rect x="0" y="6.6" width="1.2" height="1.2" fill="#b4b4b4"/><rect x="0" y="9.9" width="1.2" height="1.2" fill="#b4b4b4"/><rect x="0" y="13.2" width="1.2" height="1.2" fill="#b4b4b4"/><rect x="3" y="0" width="1.2" height="1.2" fill="#b4b4b4"/><rect x="3" y="3.3" width="1.2" height="1.2" fill="#b4b4b4"/><rect x="3" y="6.6" width="1.2" height="1.2" fill="#b4b4b4"/><rect x="3" y="9.9" width="1.2" height="1.2" fill="#b4b4b4"/><rect x="3" y="13.2" width="1.2" height="1.2" fill="#b4b4b4"/></svg>
<svg class="i" style="left:18.0px;top:128.5px" width="22" height="22" viewBox="0 0 20 20"><g transform="translate(10.5,9.5) rotate(-45)"><path d="M-4.5 -6V1.5A4.5 4.5 0 0 0 4.5 1.5V-6" fill="none" stroke="#d01818" stroke-width="4.2"/><rect x="-6.6" y="-9" width="4.2" height="3.2" fill="#fff" stroke="#c01010" stroke-width=".9"/><rect x="2.4" y="-9" width="4.2" height="3.2" fill="#fff" stroke="#c01010" stroke-width=".9"/></g></svg>
<svg class="i" style="left:51.5px;top:128.5px" width="22" height="22" viewBox="0 0 20 20"><path d="M10 18V9M10 9L4 3M10 9l6-5M10 12l5 3" stroke="#d0d0d0" stroke-width="1.3"/><circle cx="4" cy="3" r="1.5" fill="#d8d8d8"/><circle cx="16" cy="4" r="1.5" fill="#d8d8d8"/><circle cx="15" cy="15" r="1.5" fill="#d8d8d8"/></svg>
<div class="dd g" style="left:69px;top:144.5px"></div>
<div class="a" style="left:80px;top:125px;width:30px;height:30px;background:#d9d9d9;border:1px solid #c8c8c8;border-radius:2px"></div>
<svg class="i" style="left:85px;top:130px" width="20" height="20" viewBox="0 0 20 20"><rect x="3" y="4" width="2" height="2" fill="#bbb"/><rect x="12" y="6" width="2" height="2" fill="#bbb"/><rect x="7" y="13" width="2" height="2" fill="#bbb"/></svg>
<div class="dd g" style="left:102px;top:143.5px"></div>
<div class="a" style="left:112px;top:130px;width:81px;height:20px;background:#f4f4f4;border:1px solid #c6c6c6;border-radius:2px"></div>
<div class="t" style="left:117px;top:133.0px;font-size:12px;line-height:16px;color:#444;">100</div>
<div class="a" style="left:176px;top:131px;width:1px;height:18px;background:#d4d4d4"></div>
<svg class="i" style="left:179px;top:132px" width="10" height="16" viewBox="0 0 10 16"><path d="M1.5 6.5L5 3l3.5 3.5zM1.5 9.5L5 13l3.5-3.5z" fill="#888"/></svg>
<div class="a" style="left:194px;top:130px;width:87px;height:20px;background:#f4f4f4;border:1px solid #c6c6c6;border-radius:2px"></div>
<div class="t" style="left:198px;top:133.0px;font-size:12px;line-height:16px;color:#444;">px</div>
<div class="dd g" style="left:266px;top:137.5px"></div>
<svg class="i" style="left:288.0px;top:128.5px" width="22" height="22" viewBox="0 0 20 20"><path d="M10 10L3 3M10 10l8-2M10 10v8" stroke="#60b060" stroke-width="1.5"/><circle cx="10" cy="10" r="2" fill="#fff" stroke="#555" stroke-width="1"/></svg>
<svg class="i" style="left:320.0px;top:128.5px" width="22" height="22" viewBox="0 0 20 20"><path d="M3 4c3-3 9-3 13 0 3 2 1 6-2 7-2 1-2 5-4 6-3 2-6-1-6-4 0-3-3-6-1-9z" fill="#80c070" stroke="#334" stroke-width=".8"/><path d="M11 3c3-1 7 0 8 3 0 3-3 3-5 2z" fill="#999"/><circle cx="7" cy="9" r="1.4" fill="#334"/></svg>
<div class="dd" style="left:339px;top:145.5px"></div>
<svg class="i" style="left:354.0px;top:128.5px" width="22" height="22" viewBox="0 0 20 20"><path d="M3 3l14 14M17 3L3 17" stroke="#d0d0d0" stroke-width="1.6"/></svg>
<svg class="i" style="left:386.5px;top:128.5px" width="22" height="22" viewBox="0 0 20 20"><path d="M3 3l14 14M17 3L3 17" stroke="#cfcfcf" stroke-width="2.5"/><circle cx="10" cy="10" r="2.5" fill="#ddd"/></svg>
<div class="dd g" style="left:416px;top:137.5px"></div>
<svg class="i" style="left:430.0px;top:128.5px" width="22" height="22" viewBox="0 0 20 20"><path d="M3 15l5-8 4 6 5-10" stroke="#d0d0d0" stroke-width="1.4" fill="none"/><circle cx="3" cy="15" r="1.6" fill="#d8d8d8"/><circle cx="8" cy="7" r="1.6" fill="#d8d8d8"/><circle cx="12" cy="13" r="1.6" fill="#d8d8d8"/></svg>
<svg class="i" style="left:5px;top:171.0px" width="5" height="15" viewBox="0 0 5 15"><rect x="0" y="0" width="1.2" height="1.2" fill="#b4b4b4"/><rect x="0" y="3.3" width="1.2" height="1.2" fill="#b4b4b4"/><rect x="0" y="6.6" width="1.2" height="1.2" fill="#b4b4b4"/><rect x="0" y="9.9" width="1.2" height="1.2" fill="#b4b4b4"/><rect x="0" y="13.2" width="1.2" height="1.2" fill="#b4b4b4"/><rect x="3" y="0" width="1.2" height="1.2" fill="#b4b4b4"/><rect x="3" y="3.3" width="1.2" height="1.2" fill="#b4b4b4"/><rect x="3" y="6.6" width="1.2" height="1.2" fill="#b4b4b4"/><rect x="3" y="9.9" width="1.2" height="1.2" fill="#b4b4b4"/><rect x="3" y="13.2" width="1.2" height="1.2" fill="#b4b4b4"/></svg>
<svg class="i" style="left:17.0px;top:166.5px" width="24" height="24" viewBox="0 0 20 20"><path d="M3 17V7l8-4h5" stroke="#cfcfcf" stroke-width="1.3" fill="none"/><circle cx="3" cy="17" r="1.5" fill="#d8d8d8"/><circle cx="16" cy="3" r="1.5" fill="#d8d8d8"/><rect x="10" y="11" width="8.5" height="8.5" rx="1" fill="#d8d8d8" stroke="#ccc" stroke-width=".5"/><g stroke="#fff" stroke-width=".9"><path d="M14.25 12.2v6.1M11.6 13.7l5.3 3.1M16.9 13.7l-5.3 3.1"/></g><circle cx="14.25" cy="15.25" r="1.5" fill="#d8d8d8" stroke="#fff" stroke-width=".8"/></svg>
<div class="dd g" style="left:47px;top:176.5px"></div>
<svg class="i" style="left:60.5px;top:166.5px" width="24" height="24" viewBox="0 0 20 20"><circle cx="8" cy="8" r="6" fill="none" stroke="#d0d0d0" stroke-width="2"/><rect x="10" y="11" width="8.5" height="8.5" rx="1" fill="#d8d8d8" stroke="#ccc" stroke-width=".5"/><g stroke="#fff" stroke-width=".9"><path d="M14.25 12.2v6.1M11.6 13.7l5.3 3.1M16.9 13.7l-5.3 3.1"/></g><circle cx="14.25" cy="15.25" r="1.5" fill="#d8d8d8" stroke="#fff" stroke-width=".8"/></svg>
<div class="dd g" style="left:92px;top:176.5px"></div>
<svg class="i" style="left:105.5px;top:166.5px" width="24" height="24" viewBox="0 0 20 20"><ellipse cx="8" cy="8" rx="7" ry="5" fill="none" stroke="#d0d0d0" stroke-width="1.5"/><circle cx="8" cy="8" r="1.5" fill="#d0d0d0"/><rect x="10" y="11" width="8.5" height="8.5" rx="1" fill="#d8d8d8" stroke="#ccc" stroke-width=".5"/><g stroke="#fff" stroke-width=".9"><path d="M14.25 12.2v6.1M11.6 13.7l5.3 3.1M16.9 13.7l-5.3 3.1"/></g><circle cx="14.25" cy="15.25" r="1.5" fill="#d8d8d8" stroke="#fff" stroke-width=".8"/></svg>
<div class="dd g" style="left:137px;top:176.5px"></div>
<svg class="i" style="left:152.0px;top:166.5px" width="24" height="24" viewBox="0 0 20 20"><rect x="2" y="2" width="12" height="10" fill="none" stroke="#d0d0d0" stroke-width="1.5"/><circle cx="8" cy="7" r="1.5" fill="#d0d0d0"/><rect x="10" y="11" width="8.5" height="8.5" rx="1" fill="#d8d8d8" stroke="#ccc" stroke-width=".5"/><g stroke="#fff" stroke-width=".9"><path d="M14.25 12.2v6.1M11.6 13.7l5.3 3.1M16.9 13.7l-5.3 3.1"/></g><circle cx="14.25" cy="15.25" r="1.5" fill="#d8d8d8" stroke="#fff" stroke-width=".8"/></svg>
<div class="dd g" style="left:182px;top:176.5px"></div>
<svg class="i" style="left:197.0px;top:166.5px" width="24" height="24" viewBox="0 0 20 20"><path d="M8 1l6 4-2 7H4L2 5z" fill="none" stroke="#d0d0d0" stroke-width="1.5"/><rect x="10" y="11" width="8.5" height="8.5" rx="1" fill="#d8d8d8" stroke="#ccc" stroke-width=".5"/><g stroke="#fff" stroke-width=".9"><path d="M14.25 12.2v6.1M11.6 13.7l5.3 3.1M16.9 13.7l-5.3 3.1"/></g><circle cx="14.25" cy="15.25" r="1.5" fill="#d8d8d8" stroke="#fff" stroke-width=".8"/></svg>
<div class="dd g" style="left:227px;top:176.5px"></div>
<svg class="i" style="left:246px;top:171.0px" width="5" height="15" viewBox="0 0 5 15"><rect x="0" y="0" width="1.2" height="1.2" fill="#b4b4b4"/><rect x="0" y="3.3" width="1.2" height="1.2" fill="#b4b4b4"/><rect x="0" y="6.6" width="1.2" height="1.2" fill="#b4b4b4"/><rect x="0" y="9.9" width="1.2" height="1.2" fill="#b4b4b4"/><rect x="0" y="13.2" width="1.2" height="1.2" fill="#b4b4b4"/><rect x="3" y="0" width="1.2" height="1.2" fill="#b4b4b4"/><rect x="3" y="3.3" width="1.2" height="1.2" fill="#b4b4b4"/><rect x="3" y="6.6" width="1.2" height="1.2" fill="#b4b4b4"/><rect x="3" y="9.9" width="1.2" height="1.2" fill="#b4b4b4"/><rect x="3" y="13.2" width="1.2" height="1.2" fill="#b4b4b4"/></svg>
<svg class="i" style="left:259.0px;top:167.5px" width="22" height="22" viewBox="0 0 20 20"><rect x="2" y="2" width="14" height="13" fill="#dedede" stroke="#aaa" stroke-dasharray="1.5 1" stroke-width=".9"/><path d="M11 9l7 4-3 1 2.5 3-1.5 1.2-2.5-3-2 2z" fill="#fff" stroke="#666" stroke-width=".7"/></svg>
<div class="dd" style="left:288px;top:176.5px"></div>
<svg class="i" style="left:304.0px;top:167.5px" width="22" height="22" viewBox="0 0 20 20"><rect x="2" y="2" width="11" height="10" fill="#e4e4e4" stroke="#555" stroke-width=".9"/><path d="M4 5h7M4 8h7" stroke="#555" stroke-width=".8"/><rect x="7" y="9" width="11" height="9" fill="#f0e040" stroke="#555" stroke-width=".8"/></svg>
<div class="dd" style="left:333.5px;top:176.5px"></div>
<svg class="i" style="left:349.0px;top:167.5px" width="22" height="22" viewBox="0 0 20 20"><rect x="2" y="2" width="10" height="10" fill="#f0e040" stroke="#a89000" stroke-width=".8"/><rect x="5" y="5" width="10" height="10" fill="#f0e040" stroke="#a89000" stroke-width=".8"/><circle cx="15" cy="15" r="4" fill="#d83030"/><path d="M12.5 17.5l5-5" stroke="#fff" stroke-width="1.3"/></svg>
<div class="dd" style="left:378px;top:176.5px"></div>
<svg class="i" style="left:393.0px;top:167.5px" width="22" height="22" viewBox="0 0 20 20"><rect x="2" y="2" width="12" height="12" fill="#f0e040" stroke="#a89000" stroke-width=".8"/><path d="M16 19l-3-5a3 3 0 1 1 6 0z" fill="#6a86a8"/><circle cx="16" cy="13.5" r="1" fill="#fff"/></svg>
<div class="t" style="left:5px;top:202.0px;font-size:12px;line-height:16px;color:#000;">Слои</div>
<svg class="i" style="left:367px;top:203px" width="11" height="11" viewBox="0 0 11 11"><rect x=".5" y=".5" width="10" height="10" rx="2" fill="none" stroke="#777"/><rect x="4" y="2.5" width="4.5" height="4" fill="none" stroke="#666"/><rect x="2.5" y="4.5" width="4" height="4" fill="#eee" stroke="#666"/></svg>
<svg class="i" style="left:381px;top:203px" width="11" height="11" viewBox="0 0 11 11"><rect x=".5" y=".5" width="10" height="10" rx="2" fill="none" stroke="#777"/><path d="M3 3l5 5M8 3L3 8" stroke="#555" stroke-width="2.1"/></svg>
<svg class="i" style="left:6.5px;top:223.5px" width="18" height="18" viewBox="0 0 18 18"><path d="M2 13l5-4 4 4-5 4z" fill="#e06030"/><path d="M4 11l3-3 3 3-3 3z" fill="#f0b040"/><path d="M9 10l8-8" stroke="#5a86c8" stroke-width="2.2"/></svg>
<svg class="i" style="left:32.0px;top:223.5px" width="18" height="18" viewBox="0 0 18 18"><rect x="4" y="4" width="9" height="11" fill="#fff" stroke="#777" stroke-width=".8"/><rect x="6" y="2" width="9" height="11" fill="#fff" stroke="#777" stroke-width=".8"/><path d="M9 1v10M11 1v10" stroke="#777" stroke-width=".8"/><circle cx="15" cy="15" r="3.2" fill="#50a050"/><path d="M15 13v4M13 15h4" stroke="#fff" stroke-width="1.2"/></svg>
<svg class="i" style="left:57.5px;top:223.5px" width="18" height="18" viewBox="0 0 18 18"><path d="M1 9c4-6 12-6 16 0-4 6-12 6-16 0z" fill="#c4d4ec" stroke="#7a90b0" stroke-width=".8"/><circle cx="9" cy="9" r="3" fill="#4a6a9a"/><circle cx="9" cy="9" r="1.2" fill="#111"/></svg>
<svg class="i" style="left:81.5px;top:223.5px" width="18" height="18" viewBox="0 0 18 18"><path d="M2 2h15l-5.5 7v8l-4-2V9z" fill="#5a86c0" stroke="#3a5a90" stroke-width=".5"/><rect x="2" y="2" width="15" height="3" fill="#f0d850"/></svg>
<svg class="i" style="left:107.5px;top:223.5px" width="18" height="18" viewBox="0 0 18 18"><path transform="translate(0,0) scale(1)" d="M9 2.2C6 .5 1.8 1.5 2.2 4.6 2.5 6.6 4.8 7.3 6.5 7.3 4.5 7.3 1.3 8 1.5 10.8 1.8 13.8 6.5 14.2 9.5 12.3" fill="none" stroke="#5a3a7a" stroke-width="1.5"/><rect x="9" y="11" width="7" height="7" fill="#d8d8d8" stroke="#aaa" stroke-width=".6"/></svg>
<svg class="i" style="left:144.0px;top:223.5px" width="18" height="18" viewBox="0 0 18 18"><rect x="2" y="3" width="8" height="14" fill="#f4e8a8" stroke="#c8a830" stroke-width=".6"/><path d="M13 2v12M9 11l4 5 4-5" stroke="#4a7ac8" stroke-width="2" fill="none"/></svg>
<svg class="i" style="left:169.5px;top:223.5px" width="18" height="18" viewBox="0 0 18 18"><rect x="2" y="3" width="8" height="14" fill="#f4e8a8" stroke="#c8a830" stroke-width=".6"/><path d="M13 18V6M9 9l4-5 4 5" stroke="#4a7ac8" stroke-width="2" fill="none"/></svg>
<svg class="i" style="left:193.5px;top:223.5px" width="18" height="18" viewBox="0 0 18 18"><rect x="2" y="2" width="13" height="13" fill="#fff" stroke="#666" stroke-width=".8"/><rect x="10" y="12" width="8" height="5" rx="1.5" fill="#e03030"/><path d="M12 14.5h4" stroke="#fff" stroke-width="1"/></svg>
<div class="dd" style="left:66.5px;top:236px"></div>
<div class="dd" style="left:130px;top:230.5px"></div>
<div class="a" style="left:1px;top:249px;width:393px;height:763px;background:#fff;border:1px solid #c2c2c2"></div>
<div class="a" style="left:2px;top:268px;width:391px;height:18px;background:#e9e9e9"></div>
<svg class="i" style="left:7px;top:256px" width="8" height="5" viewBox="0 0 8 5"><path d="M0 0h8L4 4.5z" fill="#555"/></svg>
<svg class="i" style="left:24px;top:252.5px" width="13" height="13" viewBox="0 0 13 13"><rect x=".5" y=".5" width="12" height="12" fill="#fff" stroke="#333"/><path d="M3 6.5l2.4 3L10 2.6" fill="none" stroke="#000" stroke-width="1.6"/></svg>
<svg class="i" style="left:44.5px;top:252.0px" width="14" height="14" viewBox="0 0 14 14"><rect x="1.5" y="5.5" width="9" height="8" fill="#fff" stroke="#888" stroke-width=".8"/><rect x="3.5" y="3.5" width="9" height="8" fill="#fff" stroke="#888" stroke-width=".8"/><path d="M6 1v9M8.5 1v9" stroke="#888" stroke-width=".8"/><path d="M5.5 1h4" stroke="#888" stroke-width=".8"/></svg>
<div class="t" style="left:66px;top:252.0px;font-size:12px;line-height:16px;color:#000;">Детские площадки</div>
<svg class="i" style="left:44.0px;top:269.5px" width="15" height="15" viewBox="0 0 15 15"><rect x="1" y="1" width="13" height="15" rx="1" fill="#d8e6f6" stroke="#5a8ac8" stroke-width="1"/><path d="M1 5h13M1 8.5h13M1 12h13M5 5v11" stroke="#5a8ac8" stroke-width=".9"/></svg>
<div class="t" style="left:66px;top:270.0px;font-size:12px;line-height:16px;color:#000;font-weight:bold;"><u>railway-station-point</u></div>
<svg class="i" style="left:44.0px;top:287.5px" width="15" height="15" viewBox="0 0 15 15"><rect x="1" y="1" width="13" height="15" rx="1" fill="#f4f4f4" stroke="#a0a0a0" stroke-width="1"/><path d="M1 5h13M1 8.5h13M1 12h13M5 5v11" stroke="#a0a0a0" stroke-width=".9"/></svg>
<div class="t" style="left:66px;top:288.0px;font-size:12px;line-height:16px;color:#000;font-weight:bold;">railway-station-point</div>
<svg class="i" style="left:44px;top:306.5px" width="13" height="13" viewBox="0 0 13 13"><rect x=".5" y=".5" width="12" height="12" fill="#fff" stroke="#333"/><path d="M3 6.5l2.4 3L10 2.6" fill="none" stroke="#000" stroke-width="1.6"/></svg>
<svg class="i" style="left:64px;top:305px" width="16" height="16" viewBox="0 0 16 16"><circle cx="8" cy="8" r="3" fill="#c04848" stroke="#8a3030" stroke-width=".4"/></svg>
<div class="t" style="left:86px;top:306.15px;font-size:11.7px;line-height:15.7px;color:#000;font-weight:bold;">Детские площадки</div>
<svg class="i" style="left:44px;top:324.5px" width="13" height="13" viewBox="0 0 13 13"><rect x=".5" y=".5" width="12" height="12" fill="#fff" stroke="#333"/><path d="M3 6.5l2.4 3L10 2.6" fill="none" stroke="#000" stroke-width="1.6"/></svg>
<svg class="i" style="left:64.0px;top:323.0px" width="16" height="16" viewBox="0 0 16 16"><rect x="2.5" y="2.5" width="11" height="11" fill="none" stroke="#333"/><path d="M5 3v6M11 3v6M5 9h6v3H5z" stroke="#333" fill="#fff"/></svg>
<div class="t" style="left:86px;top:324.15px;font-size:11.7px;line-height:15.7px;color:#000;font-weight:bold;">Качели</div>
<svg class="i" style="left:44px;top:342.5px" width="13" height="13" viewBox="0 0 13 13"><rect x=".5" y=".5" width="12" height="12" fill="#fff" stroke="#333"/><path d="M3 6.5l2.4 3L10 2.6" fill="none" stroke="#000" stroke-width="1.6"/></svg>
<svg class="i" style="left:63.0px;top:341.0px" width="16" height="16" viewBox="0 0 16 16"><circle cx="4" cy="2.5" r="1.6" fill="#222"/><path d="M3 5v10M6 7l3 5M6 7l7 8" stroke="#222" stroke-width="1.6" fill="none"/><path d="M2 6h5" stroke="#222" stroke-width="1.4"/></svg>
<div class="t" style="left:84px;top:342.15px;font-size:11.7px;line-height:15.7px;color:#000;font-weight:bold;">Горки</div>
<svg class="i" style="left:44px;top:360.5px" width="13" height="13" viewBox="0 0 13 13"><rect x=".5" y=".5" width="12" height="12" fill="#fff" stroke="#333"/><path d="M3 6.5l2.4 3L10 2.6" fill="none" stroke="#000" stroke-width="1.6"/></svg>
<svg class="i" style="left:64.0px;top:359.0px" width="16" height="16" viewBox="0 0 16 16"><path d="M2 8h12c0 4-2 6-6 6s-6-2-6-6z" fill="#111"/><path d="M10 7l3-5" stroke="#111" stroke-width="1.6"/><circle cx="13" cy="2" r="1.5" fill="#111"/></svg>
<div class="t" style="left:86px;top:360.15px;font-size:11.7px;line-height:15.7px;color:#000;font-weight:bold;">Песочницы</div>
<svg class="i" style="left:44px;top:378.5px" width="13" height="13" viewBox="0 0 13 13"><rect x=".5" y=".5" width="12" height="12" fill="#fff" stroke="#333"/><path d="M3 6.5l2.4 3L10 2.6" fill="none" stroke="#000" stroke-width="1.6"/></svg>
<svg class="i" style="left:63.0px;top:377.0px" width="16" height="16" viewBox="0 0 16 16"><circle cx="6" cy="2.5" r="1.6" fill="#222"/><path d="M6 5v6l3 4M6 8l4-1M4 15h10M12 6v9" stroke="#222" stroke-width="1.4" fill="none"/></svg>
<div class="t" style="left:84px;top:378.15px;font-size:11.7px;line-height:15.7px;color:#000;font-weight:bold;">Спортивные снаряды</div>
<svg class="i" style="left:44px;top:396.5px" width="13" height="13" viewBox="0 0 13 13"><rect x=".5" y=".5" width="12" height="12" fill="#fff" stroke="#333"/><path d="M3 6.5l2.4 3L10 2.6" fill="none" stroke="#000" stroke-width="1.6"/></svg>
<svg class="i" style="left:64.0px;top:395.0px" width="16" height="16" viewBox="0 0 16 16"><path d="M3 10c-2 0-2-4 1-4 0-3 5-4 6-1 3-1 5 2 3 4z" fill="none" stroke="#444" stroke-width="1.2"/><path d="M8 8v6M6 12l2 2 2-2" stroke="#444" stroke-width="1.1" fill="none"/></svg>
<div class="t" style="left:86px;top:396.15px;font-size:11.7px;line-height:15.7px;color:#000;font-weight:bold;">Наличие сети Wi-Fi</div>
<svg class="i" style="left:7px;top:418px" width="8" height="5" viewBox="0 0 8 5"><path d="M0 0h8L4 4.5z" fill="#555"/></svg>
<svg class="i" style="left:24px;top:414.5px" width="13" height="13" viewBox="0 0 13 13"><rect x=".5" y=".5" width="12" height="12" fill="#fff" stroke="#333"/><path d="M3 6.5l2.4 3L10 2.6" fill="none" stroke="#000" stroke-width="1.6"/></svg>
<svg class="i" style="left:44.5px;top:414.0px" width="14" height="14" viewBox="0 0 14 14"><rect x="1.5" y="5.5" width="9" height="8" fill="#fff" stroke="#888" stroke-width=".8"/><rect x="3.5" y="3.5" width="9" height="8" fill="#fff" stroke="#888" stroke-width=".8"/><path d="M6 1v9M8.5 1v9" stroke="#888" stroke-width=".8"/><path d="M5.5 1h4" stroke="#888" stroke-width=".8"/></svg>
<div class="t" style="left:66px;top:414.0px;font-size:12px;line-height:16px;color:#000;">Место жительства</div>
<svg class="i" style="left:44px;top:432.5px" width="13" height="13" viewBox="0 0 13 13"><rect x=".5" y=".5" width="12" height="12" fill="#fff" stroke="#333"/><path d="M3 6.5l2.4 3L10 2.6" fill="none" stroke="#000" stroke-width="1.6"/></svg>
<svg class="i" style="left:64px;top:431px" width="16" height="16" viewBox="0 0 16 16"><circle cx="8" cy="8" r="3" fill="#e07050" stroke="#8a3030" stroke-width=".4"/></svg>
<div class="t" style="left:86px;top:432.15px;font-size:11.7px;line-height:15.7px;color:#000;font-weight:bold;">Место жительства</div>
<svg class="i" style="left:44px;top:450.5px" width="13" height="13" viewBox="0 0 13 13"><rect x=".5" y=".5" width="12" height="12" fill="#fff" stroke="#333"/><path d="M3 6.5l2.4 3L10 2.6" fill="none" stroke="#000" stroke-width="1.6"/></svg>
<svg class="i" style="left:64px;top:449px" width="16" height="16" viewBox="0 0 16 16"><circle cx="8" cy="8" r="3" fill="#f0a030" stroke="#8a3030" stroke-width=".4"/></svg>
<div class="t" style="left:86px;top:450.15px;font-size:11.7px;line-height:15.7px;color:#000;font-weight:bold;">Ближайшие площадки</div>
<svg class="i" style="left:44px;top:468.5px" width="13" height="13" viewBox="0 0 13 13"><rect x=".5" y=".5" width="12" height="12" fill="#fff" stroke="#333"/><path d="M3 6.5l2.4 3L10 2.6" fill="none" stroke="#000" stroke-width="1.6"/></svg>
<svg class="i" style="left:64.0px;top:467.0px" width="16" height="16" viewBox="0 0 16 16"><circle cx="8" cy="8" r="6.5" fill="#1a10d8"/></svg>
<div class="t" style="left:86px;top:468.15px;font-size:11.7px;line-height:15.7px;color:#000;font-weight:bold;">Место жительства, Пирогова 15</div>
<svg class="i" style="left:44px;top:486.5px" width="13" height="13" viewBox="0 0 13 13"><rect x=".5" y=".5" width="12" height="12" fill="#fff" stroke="#333"/><path d="M3 6.5l2.4 3L10 2.6" fill="none" stroke="#000" stroke-width="1.6"/></svg>
<svg class="i" style="left:64.0px;top:485.0px" width="16" height="16" viewBox="0 0 16 16"><rect x="1.5" y="1" width="13" height="13" rx="2" fill="#c8c8a8" stroke="#888" stroke-width=".8"/><rect x="3" y="3" width="10" height="6" fill="#f0e060"/><rect x="3" y="14" width="3" height="2" fill="#777"/><rect x="10" y="14" width="3" height="2" fill="#777"/></svg>
<div class="t" style="left:86px;top:486.15px;font-size:11.7px;line-height:15.7px;color:#000;font-weight:bold;">Ближайшие остановки</div>
<svg class="i" style="left:44px;top:504.5px" width="13" height="13" viewBox="0 0 13 13"><rect x=".5" y=".5" width="12" height="12" fill="#fff" stroke="#333"/><path d="M3 6.5l2.4 3L10 2.6" fill="none" stroke="#000" stroke-width="1.6"/></svg>
<svg class="i" style="left:64.0px;top:503.0px" width="16" height="16" viewBox="0 0 16 16"><path d="M0 8h2.5M7 8h2.5" stroke="#222" stroke-width="1.6"/></svg>
<div class="t" style="left:84px;top:504.15px;font-size:11.7px;line-height:15.7px;color:#000;font-weight:bold;">Маршрут до ближайших детских площадок</div>
<svg class="i" style="left:44px;top:522.5px" width="13" height="13" viewBox="0 0 13 13"><rect x=".5" y=".5" width="12" height="12" fill="#fff" stroke="#333"/><path d="M3 6.5l2.4 3L10 2.6" fill="none" stroke="#000" stroke-width="1.6"/></svg>
<svg class="i" style="left:64.0px;top:521.0px" width="16" height="16" viewBox="0 0 16 16"><path d="M0 8h2.5M7 8h2.5" stroke="#d04040" stroke-width="1.6"/></svg>
<div class="t" style="left:84px;top:522.15px;font-size:11.7px;line-height:15.7px;color:#000;font-weight:bold;">Маршрут до ближайших остановок общ. тра</div>
<svg class="i" style="left:7px;top:544px" width="8" height="5" viewBox="0 0 8 5"><path d="M0 0h8L4 4.5z" fill="#555"/></svg>
<svg class="i" style="left:24px;top:540.5px" width="13" height="13" viewBox="0 0 13 13"><rect x=".5" y=".5" width="12" height="12" fill="#fff" stroke="#333"/><path d="M3 6.5l2.4 3L10 2.6" fill="none" stroke="#000" stroke-width="1.6"/></svg>
<svg class="i" style="left:44.5px;top:540.0px" width="14" height="14" viewBox="0 0 14 14"><rect x="1.5" y="5.5" width="9" height="8" fill="#fff" stroke="#888" stroke-width=".8"/><rect x="3.5" y="3.5" width="9" height="8" fill="#fff" stroke="#888" stroke-width=".8"/><path d="M6 1v9M8.5 1v9" stroke="#888" stroke-width=".8"/><path d="M5.5 1h4" stroke="#888" stroke-width=".8"/></svg>
<div class="t" style="left:66px;top:540.0px;font-size:12px;line-height:16px;color:#000;">Общественный транспорт</div>
<svg class="i" style="left:44px;top:558.5px" width="13" height="13" viewBox="0 0 13 13"><rect x=".5" y=".5" width="12" height="12" fill="#fff" stroke="#333"/><path d="M3 6.5l2.4 3L10 2.6" fill="none" stroke="#000" stroke-width="1.6"/></svg>
<svg class="i" style="left:64.0px;top:557.0px" width="16" height="16" viewBox="0 0 16 16"><rect x="1" y="1" width="14" height="14" fill="#3a6ac8"/><rect x="4" y="3.5" width="8" height="5" rx="1" fill="none" stroke="#fff" stroke-width="1.2"/><path d="M4 8.5v3h8v-3" fill="none" stroke="#fff" stroke-width="1.2"/><circle cx="5.5" cy="12.5" r="1" fill="#fff"/><circle cx="10.5" cy="12.5" r="1" fill="#fff"/></svg>
<div class="t" style="left:86px;top:558.15px;font-size:11.7px;line-height:15.7px;color:#000;font-weight:bold;">Остановка автобуса</div>
<svg class="i" style="left:44px;top:576.5px" width="13" height="13" viewBox="0 0 13 13"><rect x=".5" y=".5" width="12" height="12" fill="#fff" stroke="#333"/><path d="M3 6.5l2.4 3L10 2.6" fill="none" stroke="#000" stroke-width="1.6"/></svg>
<svg class="i" style="left:62.0px;top:575.0px" width="16" height="16" viewBox="0 0 16 16"><rect x="2" y="3" width="10" height="12" rx="1.5" fill="#a8c8f0"/><rect x="4" y="5" width="6" height="4" fill="#e8f0fc"/><path d="M5 1h4" stroke="#a8c8f0" stroke-width="1.2"/></svg>
<div class="t" style="left:82px;top:576.15px;font-size:11.7px;line-height:15.7px;color:#000;font-weight:bold;">Остановка трамвая</div>
<svg class="i" style="left:44px;top:594.5px" width="13" height="13" viewBox="0 0 13 13"><rect x=".5" y=".5" width="12" height="12" fill="#fff" stroke="#333"/><path d="M3 6.5l2.4 3L10 2.6" fill="none" stroke="#000" stroke-width="1.6"/></svg>
<svg class="i" style="left:64.0px;top:593.0px" width="16" height="16" viewBox="0 0 16 16"><path d="M0 8h16" stroke="#d8a8a8" stroke-width="1.5"/></svg>
<div class="t" style="left:86px;top:594.15px;font-size:11.7px;line-height:15.7px;color:#000;font-weight:bold;">Трамвайные пути</div>
<svg class="i" style="left:44px;top:612.5px" width="13" height="13" viewBox="0 0 13 13"><rect x=".5" y=".5" width="12" height="12" fill="#fff" stroke="#333"/><path d="M3 6.5l2.4 3L10 2.6" fill="none" stroke="#000" stroke-width="1.6"/></svg>
<svg class="i" style="left:64.0px;top:611.0px" width="16" height="16" viewBox="0 0 16 16"><path d="M0 8h16" stroke="#d8c4bc" stroke-width="1.5"/></svg>
<div class="t" style="left:86px;top:612.15px;font-size:11.7px;line-height:15.7px;color:#000;font-weight:bold;">Автодорога</div>
<svg class="i" style="left:44px;top:630.5px" width="13" height="13" viewBox="0 0 13 13"><rect x=".5" y=".5" width="12" height="12" fill="#fff" stroke="#333"/><path d="M3 6.5l2.4 3L10 2.6" fill="none" stroke="#000" stroke-width="1.6"/></svg>
<svg class="i" style="left:64.0px;top:629.0px" width="16" height="16" viewBox="0 0 16 16"><path d="M0 8h16" stroke="#f4dca8" stroke-width="1.5"/></svg>
<div class="t" style="left:86px;top:630.15px;font-size:11.7px;line-height:15.7px;color:#000;font-weight:bold;">Водные пути</div>
<svg class="i" style="left:7px;top:652px" width="8" height="5" viewBox="0 0 8 5"><path d="M0 0h8L4 4.5z" fill="#555"/></svg>
<svg class="i" style="left:24px;top:648.5px" width="13" height="13" viewBox="0 0 13 13"><rect x=".5" y=".5" width="12" height="12" fill="#fff" stroke="#333"/><path d="M3 6.5l2.4 3L10 2.6" fill="none" stroke="#000" stroke-width="1.6"/></svg>
<svg class="i" style="left:44.5px;top:648.0px" width="14" height="14" viewBox="0 0 14 14"><rect x="1.5" y="5.5" width="9" height="8" fill="#fff" stroke="#888" stroke-width=".8"/><rect x="3.5" y="3.5" width="9" height="8" fill="#fff" stroke="#888" stroke-width=".8"/><path d="M6 1v9M8.5 1v9" stroke="#888" stroke-width=".8"/><path d="M5.5 1h4" stroke="#888" stroke-width=".8"/></svg>
<div class="t" style="left:66px;top:648.0px;font-size:12px;line-height:16px;color:#000;">Карта</div>
<svg class="i" style="left:44px;top:666.5px" width="13" height="13" viewBox="0 0 13 13"><rect x=".5" y=".5" width="12" height="12" fill="#fff" stroke="#333"/><path d="M3 6.5l2.4 3L10 2.6" fill="none" stroke="#000" stroke-width="1.6"/></svg>
<svg class="i" style="left:64px;top:664.5px" width="16" height="16" viewBox="0 0 16 16"><rect x=".5" y=".5" width="15" height="15" fill="#e8a838" stroke="#c8c8c8" stroke-width=".7"/></svg>
<div class="t" style="left:86px;top:666.15px;font-size:11.7px;line-height:15.7px;color:#000;font-weight:bold;">Полигон зданий</div>
<svg class="i" style="left:44px;top:684.5px" width="13" height="13" viewBox="0 0 13 13"><rect x=".5" y=".5" width="12" height="12" fill="#fff" stroke="#333"/><path d="M3 6.5l2.4 3L10 2.6" fill="none" stroke="#000" stroke-width="1.6"/></svg>
<svg class="i" style="left:64px;top:682.5px" width="16" height="16" viewBox="0 0 16 16"><rect x=".5" y=".5" width="15" height="15" fill="#969696" stroke="#c8c8c8" stroke-width=".7"/></svg>
<div class="t" style="left:86px;top:684.15px;font-size:11.7px;line-height:15.7px;color:#000;font-weight:bold;">Полигон мест общественного пользования</div>
<svg class="i" style="left:44px;top:702.5px" width="13" height="13" viewBox="0 0 13 13"><rect x=".5" y=".5" width="12" height="12" fill="#fff" stroke="#333"/><path d="M3 6.5l2.4 3L10 2.6" fill="none" stroke="#000" stroke-width="1.6"/></svg>
<svg class="i" style="left:64px;top:700.5px" width="16" height="16" viewBox="0 0 16 16"><rect x=".5" y=".5" width="15" height="15" fill="#5aa832" stroke="#c8c8c8" stroke-width=".7"/></svg>
<div class="t" style="left:86px;top:702.15px;font-size:11.7px;line-height:15.7px;color:#000;font-weight:bold;">Полигон газонов, лужаек и т.д.</div>
<svg class="i" style="left:44px;top:720.5px" width="13" height="13" viewBox="0 0 13 13"><rect x=".5" y=".5" width="12" height="12" fill="#fff" stroke="#333"/><path d="M3 6.5l2.4 3L10 2.6" fill="none" stroke="#000" stroke-width="1.6"/></svg>
<svg class="i" style="left:64px;top:718.5px" width="16" height="16" viewBox="0 0 16 16"><rect x=".5" y=".5" width="15" height="15" fill="#187024" stroke="#c8c8c8" stroke-width=".7"/></svg>
<div class="t" style="left:86px;top:720.15px;font-size:11.7px;line-height:15.7px;color:#000;font-weight:bold;">Полигон растительности</div>
<svg class="i" style="left:44px;top:738.5px" width="13" height="13" viewBox="0 0 13 13"><rect x=".5" y=".5" width="12" height="12" fill="#fff" stroke="#333"/><path d="M3 6.5l2.4 3L10 2.6" fill="none" stroke="#000" stroke-width="1.6"/></svg>
<svg class="i" style="left:64px;top:736.5px" width="16" height="16" viewBox="0 0 16 16"><defs><linearGradient id="gw" x1="0" y1="0" x2="0" y2="1"><stop offset="0" stop-color="#2a6ab8"/><stop offset="1" stop-color="#5aa0e8"/></linearGradient></defs><rect x=".5" y=".5" width="15" height="15" fill="url(#gw)" stroke="#c8c8c8" stroke-width=".7"/></svg>
<div class="t" style="left:86px;top:738.15px;font-size:11.7px;line-height:15.7px;color:#000;font-weight:bold;">Полигон водоемов</div>
<svg class="i" style="left:44px;top:756.5px" width="13" height="13" viewBox="0 0 13 13"><rect x=".5" y=".5" width="12" height="12" fill="#fff" stroke="#333"/><path d="M3 6.5l2.4 3L10 2.6" fill="none" stroke="#000" stroke-width="1.6"/></svg>
<svg class="i" style="left:64px;top:754.5px" width="16" height="16" viewBox="0 0 16 16"><rect x=".5" y=".5" width="15" height="15" fill="#c8c8c8" stroke="#c8c8c8" stroke-width=".7"/></svg>
<div class="t" style="left:86px;top:756.15px;font-size:11.7px;line-height:15.7px;color:#000;font-weight:bold;">Полигон промышленных территорий</div>
<svg class="i" style="left:44px;top:774.5px" width="13" height="13" viewBox="0 0 13 13"><rect x=".5" y=".5" width="12" height="12" fill="#fff" stroke="#333"/><path d="M3 6.5l2.4 3L10 2.6" fill="none" stroke="#000" stroke-width="1.6"/></svg>
<svg class="i" style="left:64px;top:772.5px" width="16" height="16" viewBox="0 0 16 16"><rect x=".5" y=".5" width="15" height="15" fill="#f0a4b4" stroke="#c8c8c8" stroke-width=".7"/></svg>
<div class="t" style="left:86px;top:774.15px;font-size:11.7px;line-height:15.7px;color:#000;font-weight:bold;">Полигон границы Томской области</div>
<svg class="a" style="left:0;top:0" width="1920" height="1080" viewBox="0 0 1920 1080"><defs><clipPath id="mc"><rect x="400" y="199" width="1049" height="813"/></clipPath></defs><g clip-path="url(#mc)"><path d="M400 199H1449V1012H400z" fill="#5aa832" stroke="none" stroke-width="1" /><path d="M390 190H532L526 391H390z" fill="#e8aa3a" stroke="#2a3a1a" stroke-width="1" /><path d="M390 190H410L408 282H390z" fill="#5aa832" stroke="#2a3a1a" stroke-width="1" /><path d="M390 303H419L418 338H402V327H390z" fill="#5aa832" stroke="#2a3a1a" stroke-width="1" /><path d="M532 199H760V395L526 391z" fill="#969696" stroke="none" stroke-width="1" /><path d="M583 199V224L760 236" fill="none" stroke="#9c6e58" stroke-width="1" /><path d="M400 390L760 395V429L400 425z" fill="#5aa832" stroke="none" stroke-width="1" /><path d="M526 391L760 395" fill="none" stroke="#f4f4f4" stroke-width="1.2" /><path d="M400 425L760 429" fill="none" stroke="#2a3a1a" stroke-width="1" /><path d="M400 404L760 407" fill="none" stroke="#9c6e58" stroke-width="0.9" /><rect x="477" y="404" width="20" height="20" fill="#2a62b8"/><rect x="481.5" y="407.5" width="11" height="8" rx="1.5" fill="none" stroke="#fff" stroke-width="1.4"/><path d="M481.5 414v5h11v-5M484 409.5h6" fill="none" stroke="#fff" stroke-width="1.4"/><circle cx="484.5" cy="420" r="1.2" fill="#fff"/><circle cx="489.5" cy="420" r="1.2" fill="#fff"/><path d="M400 426L760 430V485L400 480z" fill="#c6c6c6" stroke="none" stroke-width="1" /><path d="M400 450L760 454" fill="none" stroke="#9c6e58" stroke-width="0.9" /><path d="M400 480.5L760 485" fill="none" stroke="#f8f8f8" stroke-width="1.3" /><path d="M400 481L760 486V572L400 568z" fill="#969696" stroke="none" stroke-width="1" /><path d="M400 525L760 530" fill="none" stroke="#9c6e58" stroke-width="0.9" /><path d="M400 568.5L760 572" fill="none" stroke="#f8f8f8" stroke-width="1.3" /><path d="M400 569L760 572V623L400 621z" fill="#c6c6c6" stroke="none" stroke-width="1" /><path d="M400 578L760 584" fill="none" stroke="#e03a3a" stroke-width="0.9" /><path d="M400 595L760 599" fill="none" stroke="#e03a3a" stroke-width="0.9" /><path d="M400 611L760 613" fill="none" stroke="#9c6e58" stroke-width="0.9" /><path d="M449 622H637V702H449z" fill="#969696" stroke="none" stroke-width="1" /><path d="M449 702V622H637V702" fill="none" stroke="#f4f4f4" stroke-width="1.2" /><path d="M638 622.5L760 623" fill="none" stroke="#2a3a1a" stroke-width="1" /><path d="M390 671H416V702H390z" fill="#e8aa3a" stroke="#2a3a1a" stroke-width="0.8" /><path d="M693 645H760V701H693z" fill="#e8aa3a" stroke="#2a3a1a" stroke-width="1" /><path d="M642.5 636V825" fill="none" stroke="#9c6e58" stroke-width="0.9" /><rect x="390" y="703.5" width="245" height="68" fill="#f5561e" stroke="#ff1010" stroke-width="4" rx="2"/><path d="M712 782H904V826H712z" fill="#e8aa3a" stroke="#2a3a1a" stroke-width="1" /><path d="M431 827L497 828V858L431 857z" fill="none" stroke="#2a3a1a" stroke-width="1" /><path d="M539 859H645L645 1020H537z" fill="#e8aa3a" stroke="#2a3a1a" stroke-width="1" /><path d="M865 932H948L947 987H864z" fill="#e8aa3a" stroke="#2a3a1a" stroke-width="1" /><path d="M1001 760H1092L1077 1012H994z" fill="#c6c6c6" stroke="none" stroke-width="1" /><path d="M1092 760L1077 1012" fill="none" stroke="#2a3a1a" stroke-width="1" /><path d="M1001 760L994 1012" fill="none" stroke="#2a3a1a" stroke-width="0.6" /><path d="M1047 760L1034 1012" fill="none" stroke="#9c6e58" stroke-width="0.9" /><path d="M1001 842H1046" fill="none" stroke="#9c6e58" stroke-width="0.9" /><path d="M400 809H597L653.5 833.5L1000 842" fill="none" stroke="#9c6e58" stroke-width="0.9" /><path d="M653.5 833.5L653 1012" fill="none" stroke="#9c6e58" stroke-width="0.9" /><path d="M509 809V1012" fill="none" stroke="#9c6e58" stroke-width="0.9" /><path d="M967 760V838L957 1012" fill="none" stroke="#9c6e58" stroke-width="0.9" /><path d="M1134 760V946H1277Q1320 960 1349 993V1012" fill="none" stroke="#9c6e58" stroke-width="0.9" /><path d="M1179 956H1273V1020H1179z" fill="#e8aa3a" stroke="#2a3a1a" stroke-width="1" /><path d="M1179 986H1273" fill="none" stroke="#2a3a1a" stroke-width="1" /><path d="M631 228L722 404" fill="none" stroke="#9c6e58" stroke-width="1" /><path d="M559 404L760 290" fill="none" stroke="#9c6e58" stroke-width="1" /><path d="M629 612V657H400" fill="none" stroke="#9c6e58" stroke-width="0.9" /><path d="M400 631L760 634" fill="none" stroke="#9c6e58" stroke-width="0.8" /></g></svg>
<div class="a" style="left:1449px;top:198px;width:471px;height:815px;background:#f0f0f0"></div>
<svg class="i" style="left:1893px;top:203px" width="11" height="11" viewBox="0 0 11 11"><rect x=".5" y=".5" width="10" height="10" rx="2" fill="none" stroke="#777"/><rect x="4" y="2.5" width="4.5" height="4" fill="none" stroke="#666"/><rect x="2.5" y="4.5" width="4" height="4" fill="#eee" stroke="#666"/></svg>
<svg class="i" style="left:1907px;top:203px" width="11" height="11" viewBox="0 0 11 11"><rect x=".5" y=".5" width="10" height="10" rx="2" fill="none" stroke="#777"/><path d="M3 3l5 5M8 3L3 8" stroke="#555" stroke-width="2.1"/></svg>
<svg class="i" style="left:1703.0px;top:224.0px" width="18" height="18" viewBox="0 0 18 18"><circle cx="4" cy="4" r="3" fill="none" stroke="#999" stroke-width="1"/><path d="M6 6l8 7" stroke="#d8c870" stroke-width="3.2"/><path d="M12 11l3 3" stroke="#444" stroke-width="3"/></svg>
<div class="a" style="left:1455px;top:249px;width:465px;height:696px;background:#fff;border:1px solid #bcbcbc;border-right:1px solid #a8a8a8"></div>
<div class="a" style="left:1456px;top:250px;width:463px;height:18px;background:linear-gradient(#fff,#ececec);border-bottom:1px solid #bdbdbd"></div>
<div class="a" style="left:1456px;top:284px;width:463px;height:15px;background:#e9e8e6"></div>
<div class="a" style="left:1456px;top:314px;width:463px;height:15px;background:#e9e8e6"></div>
<div class="a" style="left:1456px;top:344px;width:463px;height:15px;background:#e9e8e6"></div>
<div class="a" style="left:1456px;top:374px;width:463px;height:15px;background:#e9e8e6"></div>
<div class="a" style="left:1456px;top:404px;width:463px;height:15px;background:#e9e8e6"></div>
<div class="t" style="left:1699px;top:284.0px;font-size:12px;line-height:16px;color:#111;">SCЃ</div>
<div class="t" style="left:1697px;top:359.0px;font-size:12px;line-height:16px;color:#111;">sPsPIP°</div>
<div class="t" style="left:1699px;top:419.0px;font-size:12px;line-height:16px;color:#111;">SCЃ</div>
<div class="t" style="left:1459px;top:956.5px;font-size:11px;line-height:15px;color:#111;">Мода</div>
<div class="a" style="left:1493px;top:951px;width:421px;height:23px;background:linear-gradient(#fdfdfd,#f2f2f2);border:1px solid #c4c4c4;border-radius:2px"></div>
<div class="t" style="left:1498px;top:956.0px;font-size:11px;line-height:15px;color:#111;">Current Layer</div>
<div class="dd" style="left:1899px;top:961px"></div>
<div class="t" style="left:1459px;top:987.5px;font-size:11px;line-height:15px;color:#8a8a8a;">Вид</div>
<div class="a" style="left:1486px;top:983px;width:71px;height:21px;background:#efefef;border:1px solid #d2d2d2;border-radius:2px"></div>
<div class="t" style="left:1490px;top:987.5px;font-size:11px;line-height:15px;color:#8a8a8a;">Дерево</div>
<div class="dd g" style="left:1541px;top:991px"></div>
<div class="a" style="left:1858px;top:983px;width:57px;height:21px;background:linear-gradient(#fdfdfd,#f0f0f0);border:1px solid #bdbdbd;border-radius:2px"></div>
<div class="t" style="left:1863px;top:987.5px;font-size:11px;line-height:15px;color:#111;">Справка</div>
<div class="a" style="left:4px;top:1016px;width:199px;height:21px;background:#fff;border:1px solid #c8c8c8;border-radius:2px"></div>
<svg class="i" style="left:11.0px;top:1019.5px" width="14" height="14" viewBox="0 0 14 14"><circle cx="6" cy="6" r="4.2" fill="none" stroke="#777" stroke-width="1.3"/><path d="M9 9l4 4" stroke="#777" stroke-width="1.5"/></svg>
<div class="t" style="left:32px;top:1020.0px;font-size:11px;line-height:15px;color:#8a8a8a;">Type to locate (Ctrl+K)</div>
<div class="t" style="left:212px;top:1020.0px;font-size:11px;line-height:15px;color:#111;">1 legend entries removed.</div>
<div class="t" style="left:1021px;top:1020.0px;font-size:11px;line-height:15px;color:#111;">Coordinate</div>
<div class="a" style="left:1078px;top:1016px;width:122px;height:21px;background:#fff;border:1px solid #c8c8c8;border-radius:2px"></div>
<div class="t" style="left:1083px;top:1020.0px;font-size:11px;line-height:15px;color:#111;">84.964278,56.467130</div>
<svg class="i" style="left:1205.0px;top:1018.0px" width="16" height="16" viewBox="0 0 16 16"><path d="M4 2c3-1 6 0 7 3l2 6c1 3-1 5-4 5s-5-3-5-5z" fill="none" stroke="#444" stroke-width="1.2"/><path d="M3 11l10-7M3 5l10 8" stroke="#444" stroke-width="1.1"/></svg>
<div class="t" style="left:1233px;top:1020.0px;font-size:11px;line-height:15px;color:#111;">Масштаб</div>
<div class="a" style="left:1282px;top:1016px;width:81px;height:21px;background:#fff;border:1px solid #c8c8c8;border-radius:2px"></div>
<div class="a" style="left:1342px;top:1017px;width:1px;height:19px;background:#d8d8d8"></div>
<div class="t" style="left:1286px;top:1020.0px;font-size:11px;line-height:15px;color:#111;">1:340</div>
<div class="dd" style="left:1348px;top:1024px"></div>
<svg class="i" style="left:1374.0px;top:1019.5px" width="14" height="14" viewBox="0 0 14 14"><rect x="2" y="7" width="10" height="7" rx="1" fill="#555"/><path d="M4 7V5a3 3 0 0 1 6 0v2" fill="none" stroke="#555" stroke-width="1.6"/></svg>
<div class="t" style="left:1395px;top:1020.0px;font-size:11px;line-height:15px;color:#111;">Magnifier</div>
<div class="a" style="left:1443px;top:1016px;width:88px;height:21px;background:#fff;border:1px solid #c8c8c8;border-radius:2px"></div>
<div class="t" style="left:1448px;top:1020.0px;font-size:11px;line-height:15px;color:#111;">100%</div>
<div class="a" style="left:1515px;top:1017px;width:1px;height:19px;background:#d8d8d8"></div>
<svg class="i" style="left:1518px;top:1018px" width="10" height="16" viewBox="0 0 10 16"><path d="M1.5 6l3.5-3.5L8.5 6zM1.5 10l3.5 3.5L8.5 10z" fill="#555"/></svg>
<div class="t" style="left:1540px;top:1020.0px;font-size:11px;line-height:15px;color:#111;">Угол поворота</div>
<div class="a" style="left:1624px;top:1016px;width:83px;height:21px;background:#fff;border:1px solid #c8c8c8;border-radius:2px"></div>
<div class="t" style="left:1629px;top:1020.0px;font-size:11px;line-height:15px;color:#111;">0,0 °</div>
<div class="a" style="left:1691px;top:1017px;width:1px;height:19px;background:#d8d8d8"></div>
<svg class="i" style="left:1694px;top:1018px" width="10" height="16" viewBox="0 0 10 16"><path d="M1.5 6l3.5-3.5L8.5 6zM1.5 10l3.5 3.5L8.5 10z" fill="#555"/></svg>
<svg class="i" style="left:1715px;top:1020.0px" width="13" height="13" viewBox="0 0 13 13"><rect x=".5" y=".5" width="12" height="12" fill="#fff" stroke="#333"/><path d="M3 6.5l2.4 3L10 2.6" fill="none" stroke="#000" stroke-width="1.6"/></svg>
<div class="t" style="left:1732px;top:1020.0px;font-size:11px;line-height:15px;color:#111;">Отрисовка</div>
<svg class="i" style="left:1804.0px;top:1018.0px" width="16" height="16" viewBox="0 0 16 16"><circle cx="8" cy="8" r="6.5" fill="none" stroke="#777" stroke-width="1"/><path d="M1.5 8h13M8 1.5v13M3 4.5h10M3 11.5h10" stroke="#777" stroke-width=".8"/><ellipse cx="8" cy="8" rx="3" ry="6.5" fill="none" stroke="#777" stroke-width=".8"/></svg>
<div class="t" style="left:1824px;top:1020.0px;font-size:11px;line-height:15px;color:#111;">EPSG:4326</div>
<svg class="i" style="left:1896.0px;top:1017.0px" width="18" height="18" viewBox="0 0 18 18"><path d="M2 3h14v9H8l-4 4v-4H2z" fill="#666" rx="3"/><circle cx="6" cy="7.5" r="1" fill="#fff"/><circle cx="9" cy="7.5" r="1" fill="#fff"/><circle cx="12" cy="7.5" r="1" fill="#fff"/></svg>
<div class="a" style="left:0px;top:1040px;width:1920px;height:40px;background:linear-gradient(90deg,#2f2420 0%,#35291f 35%,#4a3a35 64%,#40312b 80%,#35282a 100%)"></div>
<div class="a" style="left:0px;top:1040px;width:48px;height:40px;background:#2b1f1a"></div>
<svg class="i" style="left:16px;top:1052px" width="17" height="17" viewBox="0 0 17 17"><path d="M0 2.3l7-1v7H0zM8 1.2l9-1.2v8.3H8zM0 9h7v7l-7-1zM8 9h9v8l-9-1.2z" fill="#fff"/></svg>
<div class="a" style="left:48px;top:1040px;width:344px;height:40px;background:#f0efef"></div>
<svg class="i" style="left:59px;top:1050px" width="20" height="20" viewBox="0 0 20 20"><circle cx="12" cy="8" r="5.5" fill="none" stroke="#222" stroke-width="1.4"/><path d="M8 12l-6 6" stroke="#222" stroke-width="1.6"/></svg>
<div class="t" style="left:88px;top:1051.75px;font-size:14.5px;line-height:18.5px;color:#333;">Введите здесь текст для поиска</div>
<svg class="i" style="left:406px;top:1051px" width="20" height="18" viewBox="0 0 20 18"><rect x="3" y="4" width="11" height="10" fill="none" stroke="#fff" stroke-width="1.2"/><path d="M1 1h16M1 17h16M17 4v10" stroke="#fff" stroke-width="1.2"/></svg>
<svg class="i" style="left:455px;top:1048px" width="24" height="24" viewBox="0 0 24 24"><circle cx="12" cy="12" r="11" fill="#db4437"/><path d="M12 12L2.5 6.5A11 11 0 0 0 12 23z" fill="#0f9d58"/><path d="M12 12L12 23A11 11 0 0 0 21.5 6.5z" fill="#f4c20d"/><path d="M12 12L21.5 6.5A11 11 0 0 0 2.5 6.5z" fill="#db4437"/><circle cx="12" cy="12" r="5" fill="#fff"/><circle cx="12" cy="12" r="4" fill="#4285f4"/></svg>
<svg class="i" style="left:504px;top:1048px" width="24" height="24" viewBox="0 0 24 24"><path d="M8 7V4a4 4 0 0 1 8 0v3" fill="none" stroke="#ddd" stroke-width="1.5"/><rect x="2" y="7" width="20" height="16" fill="#f4f4f4"/><rect x="7" y="11" width="4.5" height="4.5" fill="#f25022"/><rect x="12.5" y="11" width="4.5" height="4.5" fill="#7fba00"/><rect x="7" y="16.5" width="4.5" height="4.5" fill="#00a4ef"/><rect x="12.5" y="16.5" width="4.5" height="4.5" fill="#ffb900"/></svg>
<svg class="i" style="left:553px;top:1049px" width="24" height="22" viewBox="0 0 24 22"><path d="M1 2h8l2 2h12v16H1z" fill="#e8b830"/><rect x="1" y="6" width="22" height="14" fill="#f8d458"/><rect x="7" y="13" width="10" height="4" fill="#3a8ad8"/></svg>
<svg class="i" style="left:602px;top:1048px" width="24" height="24" viewBox="0 0 24 24"><rect x="1" y="1" width="22" height="22" rx="1.5" fill="#2a48c8"/><rect x="6" y="1.5" width="11" height="6" fill="#dfe4f0"/><rect x="13" y="2.5" width="2.5" height="4" fill="#2a48c8"/><rect x="4" y="11" width="16" height="11" fill="#f4d8e0"/><path d="M5 14h14M5 17h14M5 20h14" stroke="#e05070" stroke-width="1"/></svg>
<svg class="i" style="left:650px;top:1048px" width="26" height="24" viewBox="0 0 26 24"><rect x="2" y="2" width="22" height="14" fill="#5a9ae0" stroke="#ccc" stroke-width="1.5"/><rect x="5" y="6" width="16" height="5" fill="#2a6ab0"/><path d="M6 8.5h14" stroke="#fff" stroke-dasharray="1.5 1" stroke-width="1.5"/><path d="M13 16v4" stroke="#aaa" stroke-width="2"/><ellipse cx="13" cy="21.5" rx="6" ry="2" fill="#ccc"/></svg>
<div class="a" style="left:688px;top:1040px;width:47px;height:40px;background:#5c4c45"></div>
<svg class="i" style="left:700px;top:1048px" width="24" height="24" viewBox="0 0 24 24"><circle cx="11" cy="11" r="8" fill="none" stroke="#7cb83a" stroke-width="4"/><path d="M13 13l8 8" stroke="#7cb83a" stroke-width="4.4"/><path d="M10 10l7 7" stroke="#f08030" stroke-width="2.5"/></svg>
<div class="a" style="left:447px;top:1078px;width:40px;height:2px;background:#b0a4f0"></div>
<div class="a" style="left:545px;top:1078px;width:40px;height:2px;background:#b0a4f0"></div>
<div class="a" style="left:594px;top:1078px;width:40px;height:2px;background:#b0a4f0"></div>
<div class="a" style="left:688px;top:1078px;width:47px;height:2px;background:#b0a4f0"></div>
<div class="a" style="left:736px;top:1040px;width:1px;height:40px;background:#6a5a52"></div>
<svg class="i" style="left:1674px;top:1055px" width="14" height="10" viewBox="0 0 14 10"><path d="M1 8l6-6 6 6" fill="none" stroke="#fff" stroke-width="1.3"/></svg>
<svg class="i" style="left:1694px;top:1051px" width="20" height="18" viewBox="0 0 20 18"><path d="M3 12c-3 0-3-5 1-5 0-4 7-5 8-1 3-1 5 2 4 4v2z" fill="#ccc"/><circle cx="14" cy="13" r="4.5" fill="#e02828"/><path d="M12 11l4 4M16 11l-4 4" stroke="#fff" stroke-width="1.2"/></svg>
<svg class="i" style="left:1719px;top:1051px" width="20" height="18" viewBox="0 0 20 18"><rect x="4" y="1" width="14" height="10" fill="none" stroke="#fff" stroke-width="1.2"/><path d="M1 14h8M5 11v3M2 5h4" stroke="#fff" stroke-width="1.2"/></svg>
<svg class="i" style="left:1744px;top:1051px" width="20" height="18" viewBox="0 0 20 18"><path d="M2 6h3l4-4v14l-4-4H2z" fill="none" stroke="#fff" stroke-width="1.2"/><path d="M12 6a3 3 0 0 1 0 6M14 4a6 6 0 0 1 0 10" fill="none" stroke="#fff" stroke-width="1.2"/></svg>
<div class="t" style="left:1771px;top:1052.5px;font-size:11px;line-height:15px;color:#fff;">РУС</div>
<div class="t" style="left:1820px;top:1045.0px;font-size:11px;line-height:15px;color:#fff;">15:32</div>
<div class="t" style="left:1806px;top:1061.5px;font-size:11px;line-height:15px;color:#fff;">25.01.2021</div>
<svg class="i" style="left:1878px;top:1050px" width="26" height="26" viewBox="0 0 26 26"><path d="M1 2h16v12H8l-3 3v-3H1z" fill="#fafafa"/><path d="M4 5.5h10M4 8.5h10M4 11.5h7" stroke="#3a2c28" stroke-width="1.2"/><circle cx="16.5" cy="17" r="6.5" fill="#302624" stroke="#ddd" stroke-width="1"/><text x="11.3" y="20.8" font-size="10" font-family="Liberation Sans" fill="#fff">13</text></svg>
<div class="a" style="left:744px;top:183px;width:961px;height:602px;background:#f0f0f0;border:1px solid #707070;box-shadow:2px 5px 15px 1px rgba(0,0,0,.22)"></div>
<div class="a" style="left:745px;top:184px;width:959px;height:30px;background:#fff"></div>
<svg class="i" style="left:752.5px;top:190.0px" width="17" height="17" viewBox="0 0 18 18"><circle cx="8.3" cy="8.3" r="6" fill="none" stroke="#62a235" stroke-width="3.3"/><path d="M10.5 10.5l5.5 5.5" stroke="#62a235" stroke-width="3.6" stroke-linecap="round"/><path d="M8.5 8.5l4 4" stroke="#e8c050" stroke-width="1.6"/><circle cx="8" cy="8" r="1.8" fill="#f07838"/></svg>
<div class="t" style="left:777px;top:191.2px;font-size:11.6px;line-height:15.6px;color:#000;">railway-station-point — Features Total: 132, Filtered: 132, Selected: 0</div>
<div class="a" style="left:1585px;top:198px;width:11px;height:1px;background:#111"></div>
<div class="a" style="left:1630px;top:193px;width:11px;height:11px;border:1px solid #111"></div>
<svg class="i" style="left:1675px;top:192px" width="12" height="12" viewBox="0 0 12 12"><path d="M.5 .5l11 11M11.5 .5l-11 11" stroke="#111" stroke-width="1.1"/></svg>
<svg class="i" style="left:751.0px;top:220.0px" width="18" height="18" viewBox="0 0 20 20"><path d="M3 18l1.5-5L14 3.5 16.5 6 7 15.5z" fill="#f0d840" stroke="#888" stroke-width=".8"/><path d="M3 18l1.5-5 2.5 2.5z" fill="#888"/></svg>
<svg class="i" style="left:777.0px;top:220.0px" width="18" height="18" viewBox="0 0 20 20"><rect x="2" y="3" width="15" height="3" fill="#d8d8d8"/><rect x="2" y="8" width="15" height="3" fill="#d8d8d8"/><rect x="2" y="13" width="15" height="3" fill="#d8d8d8"/><path d="M8 18l9-13 1.5 1.5-9 13z" fill="#c4c4c4"/></svg>
<svg class="i" style="left:801.0px;top:220.0px" width="18" height="18" viewBox="0 0 20 20"><rect x="2" y="2" width="14" height="14" rx="1" fill="#d8d8d8"/><rect x="4.5" y="3" width="9" height="5" fill="#eee"/><rect x="5" y="10" width="8" height="5" fill="#eee"/><path d="M11 17l6-6 2 2-6 6z" fill="#d0d0d0"/></svg>
<svg class="i" style="left:827.0px;top:220.0px" width="18" height="18" viewBox="0 0 20 20"><path d="M3.5 9A6.5 6.5 0 0 1 15 5.5L17 3.5V9h-5.5l2-2A4.5 4.5 0 0 0 5.5 9z" fill="#3a86d0"/><path d="M16.5 11A6.5 6.5 0 0 1 5 14.5L3 16.5V11h5.5l-2 2A4.5 4.5 0 0 0 14.5 11z" fill="#3a86d0"/></svg>
<div class="sep" style="left:852px;top:223.5px;height:13px;background:#d0d0d0"></div>
<svg class="i" style="left:859.5px;top:220.0px" width="18" height="18" viewBox="0 0 20 20"><rect x="2" y="3" width="13" height="13" fill="#e8e8e8" stroke="#d0d0d0"/><path d="M2 6h13M2 9h13M6 6v10" stroke="#d4d4d4"/><path d="M14 14v5M11.5 16.5h5" stroke="#ccc" stroke-width="1.5"/></svg>
<svg class="i" style="left:883.0px;top:220.0px" width="18" height="18" viewBox="0 0 20 20"><rect x="4" y="5" width="12" height="13" fill="none" stroke="#cfcfcf" stroke-width="1.5"/><path d="M2.5 4h15M8 2h4M7.5 8v8M10 8v8M12.5 8v8" stroke="#cfcfcf" stroke-width="1.3"/></svg>
<svg class="i" style="left:908.0px;top:220.0px" width="18" height="18" viewBox="0 0 20 20"><circle cx="4" cy="14" r="2.5" fill="none" stroke="#c8c8c8" stroke-width="1.3"/><circle cx="16" cy="14" r="2.5" fill="none" stroke="#c8c8c8" stroke-width="1.3"/><path d="M5.5 12L15 4M14.5 12L5 4" stroke="#c8c8c8" stroke-width="1.2"/></svg>
<svg class="i" style="left:933.5px;top:220.0px" width="18" height="18" viewBox="0 0 20 20"><path d="M6 1h7l3 3v11H6z" fill="#f0f0f0" stroke="#cfcfcf"/><path d="M2 5h7l3 3v11H2z" fill="#f4f4f4" stroke="#cfcfcf"/><path d="M4 11h6M4 13h6M4 15h6" stroke="#d4d4d4" stroke-width=".8"/></svg>
<svg class="i" style="left:959.0px;top:220.0px" width="18" height="18" viewBox="0 0 20 20"><rect x="3" y="2" width="14" height="17" rx="1" fill="#ececec" stroke="#cfcfcf"/><rect x="5" y="5" width="10" height="12" fill="#f8f8f8" stroke="#d8d8d8" stroke-width=".6"/><path d="M7 8h6M7 10.5h6M7 13h6" stroke="#d4d4d4" stroke-width=".8"/></svg>
<div class="sep" style="left:984.5px;top:223.5px;height:13px;background:#d0d0d0"></div>
<svg class="i" style="left:991.5px;top:220.0px" width="18" height="18" viewBox="0 0 20 20"><rect x="8" y="8" width="11" height="10" fill="#f0e040" stroke="#c8b000" stroke-width=".6"/><path transform="translate(0,0) scale(1)" d="M9 2.2C6 .5 1.8 1.5 2.2 4.6 2.5 6.6 4.8 7.3 6.5 7.3 4.5 7.3 1.3 8 1.5 10.8 1.8 13.8 6.5 14.2 9.5 12.3" fill="none" stroke="#2a2050" stroke-width="1.5"/></svg>
<svg class="i" style="left:1016.0px;top:220.0px" width="18" height="18" viewBox="0 0 20 20"><rect x="2" y="3" width="16" height="4" rx="1" fill="#f0d820" stroke="#c8a800" stroke-width=".6"/><rect x="2" y="8.5" width="16" height="4" rx="1" fill="#f0d820" stroke="#c8a800" stroke-width=".6"/><rect x="2" y="14" width="16" height="4" rx="1" fill="#f0d820" stroke="#c8a800" stroke-width=".6"/></svg>
<svg class="i" style="left:1040.5px;top:220.0px" width="18" height="18" viewBox="0 0 20 20"><rect x="2" y="2" width="16" height="16" fill="#f4e060" stroke="#888" stroke-width=".8"/><path d="M2 2l16 16" stroke="#333" stroke-width="1"/><path d="M2 2v16h16z" fill="#f8f4d0"/></svg>
<svg class="i" style="left:1066.5px;top:220.0px" width="18" height="18" viewBox="0 0 20 20"><rect x="2" y="2" width="10" height="10" fill="#f0e040" stroke="#a89000" stroke-width=".8"/><rect x="5" y="5" width="10" height="10" fill="#f0e040" stroke="#a89000" stroke-width=".8"/><circle cx="15" cy="15" r="4" fill="#d83030"/><path d="M12.5 17.5l5-5" stroke="#fff" stroke-width="1.3"/></svg>
<svg class="i" style="left:1091.0px;top:220.0px" width="18" height="18" viewBox="0 0 20 20"><path d="M2 2h15l-5.5 7v8l-4-2V9z" fill="#5a86c0" stroke="#3a5a90" stroke-width=".5"/><rect x="2" y="2" width="15" height="3" fill="#f0d850"/></svg>
<svg class="i" style="left:1115.5px;top:220.0px" width="18" height="18" viewBox="0 0 20 20"><rect x="2" y="3" width="16" height="14" fill="#f0e068" stroke="#aaa" stroke-width=".6"/><path d="M10 4v12M6 8l4-4 4 4M5 4h10" stroke="#3a6aa8" stroke-width="1.4" fill="none"/></svg>
<svg class="i" style="left:1141.0px;top:220.0px" width="18" height="18" viewBox="0 0 20 20"><rect x="6.5" y="6.5" width="7" height="7" fill="#f0e040" transform="rotate(45 10 10)"/><g fill="#5a82b8"><rect x="7.5" y="1" width="5" height="5" transform="rotate(45 10 3.5)"/><rect x="7.5" y="14" width="5" height="5" transform="rotate(45 10 16.5)"/><rect x="1" y="7.5" width="5" height="5" transform="rotate(45 3.5 10)"/><rect x="14" y="7.5" width="5" height="5" transform="rotate(45 16.5 10)"/></g></svg>
<svg class="i" style="left:1165.5px;top:220.0px" width="18" height="18" viewBox="0 0 20 20"><rect x="1" y="3" width="10" height="11" fill="#f0e040"/><path d="M8 12L2 18" stroke="#d8b830" stroke-width="2.8"/><path d="M8 12L2 18" stroke="#333" stroke-width=".6"/><circle cx="12" cy="7" r="6" fill="#fafafa" fill-opacity=".85" stroke="#777" stroke-width="1.1"/></svg>
<div class="sep" style="left:1191px;top:223.5px;height:13px;background:#d0d0d0"></div>
<svg class="i" style="left:1198.0px;top:220.0px" width="18" height="18" viewBox="0 0 20 20"><rect x="2" y="2" width="12" height="15" fill="#ececec" stroke="#d4d4d4"/><path d="M2 6h12M6 2v15" stroke="#dadada"/><rect x="11" y="12" width="7" height="7" fill="#e0e0e0"/><path d="M14.5 13v5M12 15.5h5" stroke="#fff"/></svg>
<svg class="i" style="left:1223.5px;top:220.0px" width="18" height="18" viewBox="0 0 20 20"><rect x="2" y="2" width="12" height="15" fill="#ececec" stroke="#d4d4d4"/><path d="M2 6h12M6 2v15" stroke="#dadada"/><path d="M12 13l5 5M17 13l-5 5" stroke="#d0d0d0" stroke-width="1.4"/></svg>
<svg class="i" style="left:1248.0px;top:220.0px" width="18" height="18" viewBox="0 0 20 20"><rect x="2" y="2" width="15" height="16" fill="#dbe8f8" stroke="#5a8ac8" stroke-width=".9"/><path d="M4 6h11M4 9h11M4 12h11" stroke="#8ab" stroke-width=".7"/><path d="M5 17L15 4" stroke="#d86020" stroke-width="2.6"/><path d="M5 17L15 4" stroke="#333" stroke-width=".5"/></svg>
<svg class="i" style="left:1273.0px;top:220.0px" width="18" height="18" viewBox="0 0 20 20"><path d="M3 2v16M17 2v16" stroke="#555" stroke-width="1"/><rect x="1.5" y="17" width="17" height="1.8" fill="#555"/><path d="M3 5h14M3 10h14M3 15h14" stroke="#777" stroke-width=".6"/><g stroke-width="1"><path d="M6 3.5l1.5 1.5L6 6.5 4.5 5zM12 3.5l1.5 1.5L12 6.5 10.5 5z" fill="#f4b0b0" stroke="#d04040"/><path d="M6 8.5l1.5 1.5L6 11.5 4.5 10zM10 8.5l1.5 1.5L10 11.5 8.5 10z" fill="#b0e0b0" stroke="#40a040"/><path d="M6 13.5l1.5 1.5L6 16.5 4.5 15zM10 13.5l1.5 1.5L10 16.5 8.5 15zM14 13.5l1.5 1.5L14 16.5 12.5 15z" fill="#b0c8f0" stroke="#4070c0"/></g></svg>
<div class="sep" style="left:1298px;top:223.5px;height:13px;background:#d0d0d0"></div>
<svg class="i" style="left:1305.0px;top:220.0px" width="18" height="18" viewBox="0 0 20 20"><rect x="2" y="2" width="16" height="4" rx="1" fill="#f4f4f4" stroke="#999" stroke-width=".7"/><rect x="2" y="8" width="16" height="4" rx="1" fill="#a8d8a0" stroke="#70a070" stroke-width=".7"/><rect x="2" y="14" width="16" height="4" rx="1" fill="#f4f4f4" stroke="#999" stroke-width=".7"/><path d="M4 4h12" stroke="#333" stroke-width=".8"/><path d="M4 16h4" stroke="#c03030" stroke-width="1"/></svg>
<div class="sep" style="left:1330px;top:223.5px;height:13px;background:#d0d0d0"></div>
<svg class="i" style="left:1337.0px;top:220.0px" width="18" height="18" viewBox="0 0 20 20"><rect x="2" y="3" width="16" height="14" fill="#e4ecf6" stroke="#777" stroke-width=".8"/><rect x="2" y="3" width="16" height="3" fill="#555"/><path d="M2 10h16M8 6v11" stroke="#8ab" stroke-width=".8"/></svg>
<svg class="i" style="left:1362.0px;top:220.0px" width="18" height="18" viewBox="0 0 20 20"><circle cx="8" cy="8" r="6.5" fill="#c8d8ec" stroke="#7a8aa0" stroke-width="1.2"/><circle cx="8" cy="8" r="3.6" fill="#4a86c8"/><path d="M7 6.2l3 1.8-3 1.8z" fill="#fff"/><path d="M11 11l6 3-2.5.6 2 2.4-1 .8-2-2.4-1.5 1.6z" fill="#fff" stroke="#777" stroke-width=".6"/></svg>
<svg class="i" style="left:748.0px;top:248.0px" width="18" height="18" viewBox="0 0 18 18"><path transform="translate(0,0) scale(0.95)" d="M9 2.2C6 .5 1.8 1.5 2.2 4.6 2.5 6.6 4.8 7.3 6.5 7.3 4.5 7.3 1.3 8 1.5 10.8 1.8 13.8 6.5 14.2 9.5 12.3" fill="none" stroke="#4a3a6a" stroke-width="1.5"/><circle cx="10.5" cy="12.5" r="2.6" fill="none" stroke="#777" stroke-width=".9"/><path d="M8.8 14.2l-2.5 2.5" stroke="#c8a828" stroke-width="1.3"/></svg>
<div class="t" style="left:769px;top:250.5px;font-size:11px;line-height:15px;color:#000;">Выражение</div>
<div class="dd" style="left:992px;top:261px"></div>
<div class="a" style="left:745px;top:270px;width:256px;height:460px;background:#fff;border:1px solid #b4b4b4;border-left:none"></div>
<div class="a" style="left:746px;top:271px;width:240px;height:24px;background:#0a6fd4"></div>
<div class="a" style="left:986px;top:271px;width:14px;height:457px;background:#e6e6e6;border-left:1px solid #d0d0d0"></div>
<div class="a" style="left:987px;top:271px;width:13px;height:13px;background:#fff;border-bottom:1px solid #d0d0d0"></div>
<svg class="i" style="left:989px;top:274px" width="9" height="6" viewBox="0 0 9 6"><path d="M0 5.5L4.5 .5 9 5.5z" fill="#555"/></svg>
<div class="a" style="left:987px;top:284px;width:13px;height:62px;background:linear-gradient(90deg,#fff,#f4f4f4);border:1px solid #cfcfcf;border-left:none;border-right:none"></div>
<div class="a" style="left:987px;top:715px;width:13px;height:13px;background:#fff;border-top:1px solid #d0d0d0"></div>
<svg class="i" style="left:989px;top:719px" width="9" height="6" viewBox="0 0 9 6"><path d="M0 .5L4.5 5.5 9 .5z" fill="#555"/></svg>
<div class="a" style="left:750px;top:276px;width:13px;height:13px;background:#f0f0f0;border:1px solid #a8a8a8"></div>
<div class="t" style="left:773px;top:275.2px;font-size:12px;line-height:16px;color:#fff;">1-п Ј®аЎ®«мЁж</div>
<div class="a" style="left:750px;top:300px;width:13px;height:13px;background:#f0f0f0;border:1px solid #a8a8a8"></div>
<div class="t" style="left:773px;top:299.15px;font-size:12px;line-height:16px;color:#111;">1-п Ј®аЎ®«мЁж</div>
<div class="a" style="left:750px;top:324px;width:13px;height:13px;background:#f0f0f0;border:1px solid #a8a8a8"></div>
<div class="t" style="left:773px;top:323.09999999999997px;font-size:12px;line-height:16px;color:#111;">102 Є¬</div>
<div class="a" style="left:750px;top:348px;width:13px;height:13px;background:#f0f0f0;border:1px solid #a8a8a8"></div>
<div class="t" style="left:773px;top:347.05px;font-size:12px;line-height:16px;color:#111;">104 Є¬</div>
<div class="a" style="left:750px;top:372px;width:13px;height:13px;background:#f0f0f0;border:1px solid #a8a8a8"></div>
<div class="t" style="left:773px;top:371.0px;font-size:12px;line-height:16px;color:#111;">108 Є¬</div>
<div class="a" style="left:750px;top:396px;width:13px;height:13px;background:#f0f0f0;border:1px solid #a8a8a8"></div>
<div class="t" style="left:773px;top:394.95px;font-size:12px;line-height:16px;color:#111;">115 Є¬</div>
<div class="a" style="left:750px;top:420px;width:13px;height:13px;background:#f0f0f0;border:1px solid #a8a8a8"></div>
<div class="t" style="left:773px;top:418.9px;font-size:12px;line-height:16px;color:#111;">123 Є¬</div>
<div class="a" style="left:750px;top:444px;width:13px;height:13px;background:#f0f0f0;border:1px solid #a8a8a8"></div>
<div class="t" style="left:773px;top:442.84999999999997px;font-size:12px;line-height:16px;color:#111;">126 Є¬</div>
<div class="a" style="left:750px;top:468px;width:13px;height:13px;background:#f0f0f0;border:1px solid #a8a8a8"></div>
<div class="t" style="left:773px;top:466.8px;font-size:12px;line-height:16px;color:#111;">135 Є¬</div>
<div class="a" style="left:750px;top:492px;width:13px;height:13px;background:#f0f0f0;border:1px solid #a8a8a8"></div>
<div class="t" style="left:773px;top:490.74999999999994px;font-size:12px;line-height:16px;color:#111;">149 Є¬</div>
<div class="a" style="left:750px;top:516px;width:13px;height:13px;background:#f0f0f0;border:1px solid #a8a8a8"></div>
<div class="t" style="left:773px;top:514.7px;font-size:12px;line-height:16px;color:#111;">153 Є¬</div>
<div class="a" style="left:750px;top:539px;width:13px;height:13px;background:#f0f0f0;border:1px solid #a8a8a8"></div>
<div class="t" style="left:773px;top:538.6500000000001px;font-size:12px;line-height:16px;color:#111;">161 Є¬</div>
<div class="a" style="left:750px;top:563px;width:13px;height:13px;background:#f0f0f0;border:1px solid #a8a8a8"></div>
<div class="t" style="left:773px;top:562.6px;font-size:12px;line-height:16px;color:#111;">166 Є¬ (Ќ®ўЁЄ®ўЄ&nbsp;)</div>
<div class="a" style="left:750px;top:587px;width:13px;height:13px;background:#f0f0f0;border:1px solid #a8a8a8"></div>
<div class="t" style="left:773px;top:586.55px;font-size:12px;line-height:16px;color:#111;">174 Є¬</div>
<div class="a" style="left:750px;top:611px;width:13px;height:13px;background:#f0f0f0;border:1px solid #a8a8a8"></div>
<div class="t" style="left:773px;top:610.5px;font-size:12px;line-height:16px;color:#111;">195 Є¬</div>
<div class="a" style="left:750px;top:635px;width:13px;height:13px;background:#f0f0f0;border:1px solid #a8a8a8"></div>
<div class="t" style="left:773px;top:634.45px;font-size:12px;line-height:16px;color:#111;">204 Є¬</div>
<div class="a" style="left:750px;top:659px;width:13px;height:13px;background:#f0f0f0;border:1px solid #a8a8a8"></div>
<div class="t" style="left:773px;top:658.4000000000001px;font-size:12px;line-height:16px;color:#111;">254 Є¬</div>
<div class="a" style="left:750px;top:683px;width:13px;height:13px;background:#f0f0f0;border:1px solid #a8a8a8"></div>
<div class="t" style="left:773px;top:682.35px;font-size:12px;line-height:16px;color:#111;">26 Є¬</div>
<div class="a" style="left:750px;top:707px;width:13px;height:13px;background:#f0f0f0;border:1px solid #a8a8a8"></div>
<div class="t" style="left:773px;top:706.3px;font-size:12px;line-height:16px;color:#111;">28 Є¬</div>
<svg class="i" style="left:748.0px;top:735.0px" width="18" height="18" viewBox="0 0 18 18"><path d="M16 2.5L10 9l6 6.5zM10.5 2.5L3 9l7.5 6.5z" fill="#ccd0d8" stroke="#b8bcc4" stroke-width=".5"/></svg>
<svg class="i" style="left:772.5px;top:735.0px" width="18" height="18" viewBox="0 0 18 18"><path d="M13 2.5L5 9l8 6.5z" fill="#ccd0d8" stroke="#b8bcc4" stroke-width=".5"/></svg>
<svg class="i" style="left:797.0px;top:735.0px" width="18" height="18" viewBox="0 0 18 18"><path d="M5 3l8 6-8 6z" fill="#4a78c0"/></svg>
<svg class="i" style="left:822.0px;top:735.0px" width="18" height="18" viewBox="0 0 18 18"><path d="M2 3l7 6-7 6zM8 3l7 6-7 6z" fill="#4a78c0"/><path d="M15 3v12" stroke="#4a78c0" stroke-width="1.6"/></svg>
<div class="t" style="left:845px;top:735.5px;font-size:16px;line-height:20px;color:#111;">1 / 132</div>
<svg class="i" style="left:909.5px;top:734.0px" width="18" height="18" viewBox="0 0 18 18"><path d="M9 1a5.5 5.5 0 0 0-3 10v3h6v-3A5.5 5.5 0 0 0 9 1z" fill="#f8f060" stroke="#d8c820" stroke-width=".8"/><rect x="6" y="14" width="6" height="3" fill="#999"/></svg>
<svg class="i" style="left:955.5px;top:735.0px" width="16" height="16" viewBox="0 0 18 18"><g fill="#5a82b8"><rect x="6.5" y="1.5" width="5" height="5" transform="rotate(45 9 4)"/><rect x="6.5" y="11.5" width="5" height="5" transform="rotate(45 9 14)"/><rect x="1.5" y="6.5" width="5" height="5" transform="rotate(45 4 9)"/><rect x="11.5" y="6.5" width="5" height="5" transform="rotate(45 14 9)"/></g></svg>
<svg class="i" style="left:981.0px;top:735.0px" width="16" height="16" viewBox="0 0 18 18"><path d="M7 10L1.5 16" stroke="#d8b830" stroke-width="2.5"/><path d="M7 10L1.5 16" stroke="#333" stroke-width=".5"/><circle cx="11" cy="6.5" r="5" fill="#fbfbfb" stroke="#666" stroke-width="1"/></svg>
<div class="a" style="left:748px;top:758px;width:98px;height:23px;background:linear-gradient(#fdfdfd,#f0f0f0);border:1px solid #bdbdbd;border-radius:2px"></div>
<svg class="i" style="left:753.0px;top:762.0px" width="14" height="14" viewBox="0 0 18 18"><path d="M2 2h15l-5.5 7v8l-4-2V9z" fill="#5a86c0" stroke="#3a5a90" stroke-width=".5"/><rect x="2" y="2" width="15" height="3" fill="#f0d850"/></svg>
<div class="t" style="left:772px;top:763.0px;font-size:11px;line-height:15px;color:#111;">Все объекты</div>
<svg class="i" style="left:839px;top:775px" width="5" height="3" viewBox="0 0 5 3"><path d="M0 0h5L2.5 3z" fill="#333"/></svg>
<div class="a" style="left:1005px;top:245px;width:699px;height:510px;background:#f0f0f0;border:2px solid #b8b8b8;border-right:1px solid #b8b8b8"></div>
<div class="t" style="left:1024px;top:270.0px;font-size:11px;line-height:15px;color:#111;">OSM_ID</div>
<div class="a" style="left:1076px;top:268px;width:608px;height:16px;background:#f9f9f9"></div>
<div class="t" style="left:1079px;top:270.0px;font-size:11px;line-height:15px;color:#111;">1088750535</div>
<div class="t" style="left:1024px;top:298.0px;font-size:11px;line-height:15px;color:#111;">NAME</div>
<div class="a" style="left:1076px;top:296px;width:608px;height:16px;background:#f9f9f9"></div>
<div class="t" style="left:1079px;top:298.0px;font-size:11px;line-height:15px;color:#111;">1-п Ј®аЎ®«мЁж</div>
<div class="t" style="left:1024px;top:326.0px;font-size:11px;line-height:15px;color:#111;">RAILWAY</div>
<div class="a" style="left:1076px;top:324px;width:608px;height:16px;background:#f9f9f9"></div>
<div class="t" style="left:1079px;top:326.0px;font-size:11px;line-height:15px;color:#111;">tram_stop</div>
<div class="a" style="left:1653px;top:758px;width:24px;height:23px;background:#e2e2e2;border:1px solid #b8b8b8;border-radius:3px"></div>
<svg class="i" style="left:1657.5px;top:762.0px" width="15" height="15" viewBox="0 0 15 15"><rect x="1" y="1" width="13" height="13" fill="#e8eef6" stroke="#8a9ab0" stroke-width=".8"/><path d="M2.5 5h2M2.5 10h2" stroke="#333" stroke-width="1.3"/><rect x="6" y="3.5" width="6" height="3" rx="1" fill="#fff" stroke="#8ab" stroke-width=".6"/><rect x="6" y="8.5" width="6" height="3" rx="1" fill="#fff" stroke="#8ab" stroke-width=".6"/></svg>
<svg class="i" style="left:1681.5px;top:761.5px" width="15" height="15" viewBox="0 0 15 15"><rect x="1" y="1" width="13" height="13" rx="1" fill="#dce8f6" stroke="#6a9ad0" stroke-width=".8"/><path d="M1 4.5h13" stroke="#6a9ad0" stroke-width="2.4"/><path d="M2.5 7.5h10M2.5 9.5h10M2.5 11.5h10M5.5 5v9" stroke="#9ab8d8" stroke-width=".6"/></svg>
<svg class="i" style="left:1002px;top:496px" width="3" height="18" viewBox="0 0 3 18"><rect x="1" y="0" width="1" height="1" fill="#aaa"/><rect x="1" y="3" width="1" height="1" fill="#aaa"/><rect x="1" y="6" width="1" height="1" fill="#aaa"/><rect x="1" y="9" width="1" height="1" fill="#aaa"/><rect x="1" y="12" width="1" height="1" fill="#aaa"/><rect x="1" y="15" width="1" height="1" fill="#aaa"/></svg>
<svg class="i" style="left:396px;top:588px" width="3" height="18" viewBox="0 0 3 18"><rect x="1" y="0" width="1" height="1" fill="#aaa"/><rect x="1" y="3" width="1" height="1" fill="#aaa"/><rect x="1" y="6" width="1" height="1" fill="#aaa"/><rect x="1" y="9" width="1" height="1" fill="#aaa"/><rect x="1" y="12" width="1" height="1" fill="#aaa"/><rect x="1" y="15" width="1" height="1" fill="#aaa"/></svg>
</body></html>
